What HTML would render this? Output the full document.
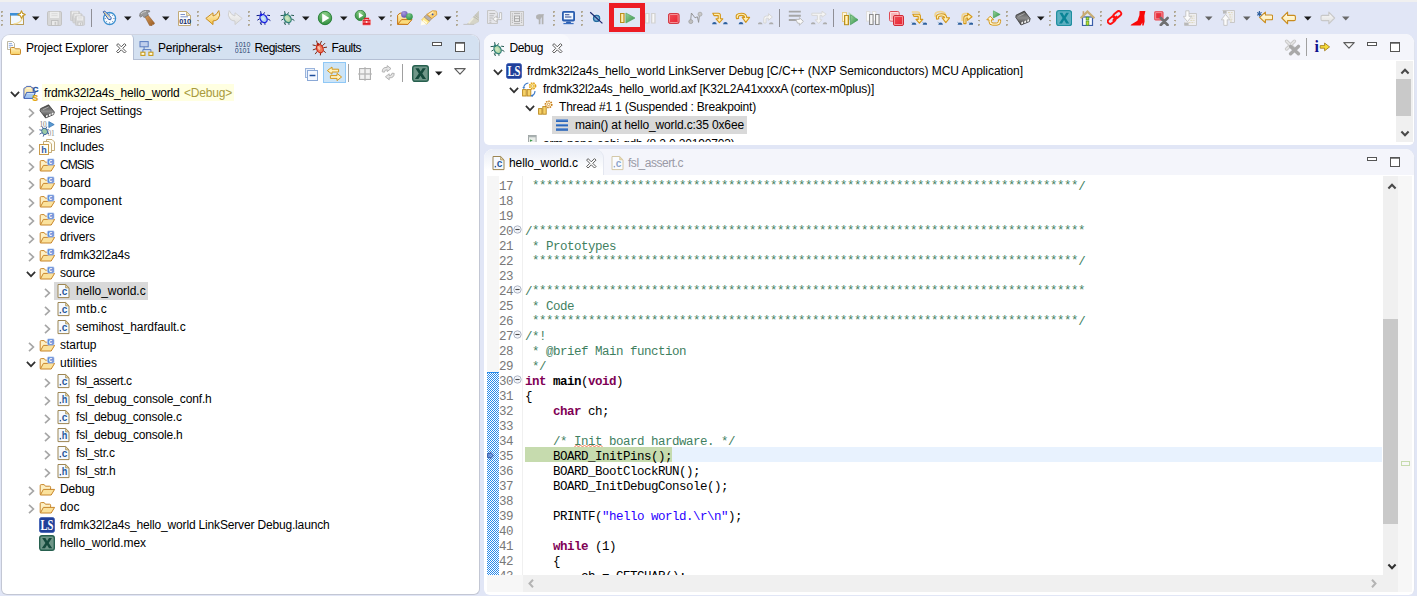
<!DOCTYPE html>
<html><head><meta charset="utf-8"><title>MCUXpresso IDE</title>
<style>
html,body{margin:0;padding:0}
body{width:1417px;height:596px;position:relative;overflow:hidden;background:#e1e6f6;font-family:"Liberation Sans", sans-serif;font-size:12px;color:#000}
div,span.t,svg.i,span.ln,span.cd{position:absolute}
.t{white-space:pre;line-height:18px;height:18px;font-size:12px}
.ln{font-family:"Liberation Mono", monospace;font-size:12.5px;letter-spacing:-0.5px;color:#787878;white-space:pre;line-height:15px;height:15px}
.cd{font-family:"Liberation Mono", monospace;font-size:12.5px;letter-spacing:-0.5px;color:#000;white-space:pre;line-height:15px;height:15px}
.c{color:#3f7f5f} .k{color:#7f0055;font-weight:bold} .b{font-weight:bold} .s{color:#2a00ff}
.cu{color:#3f7f5f} .st{position:relative;top:-1px}
</style></head><body>
<svg width="0" height="0" style="position:absolute"><defs>
<linearGradient id="gGold" x1="0" y1="0" x2="0" y2="1"><stop offset="0" stop-color="#fff8e0"/><stop offset="1" stop-color="#f6c344"/></linearGradient>
<linearGradient id="gGold2" x1="0" y1="0" x2="1" y2="0"><stop offset="0" stop-color="#f3c650"/><stop offset="0.5" stop-color="#fff3c8"/><stop offset="1" stop-color="#f0bc48"/></linearGradient>
<radialGradient id="gGreen" cx="0.5" cy="0.25" r="0.8"><stop offset="0" stop-color="#8fd08a"/><stop offset="1" stop-color="#2b8a3a"/></radialGradient>
<linearGradient id="gGreenT" x1="0" y1="0" x2="1" y2="1"><stop offset="0" stop-color="#9ad49a"/><stop offset="1" stop-color="#2e8f45"/></linearGradient>
<linearGradient id="gGray" x1="0" y1="0" x2="0" y2="1"><stop offset="0" stop-color="#fbfbfb"/><stop offset="1" stop-color="#dcdcdc"/></linearGradient>
<linearGradient id="gGrayH" x1="0" y1="0" x2="1" y2="0"><stop offset="0" stop-color="#dadada"/><stop offset="0.5" stop-color="#fbfbfb"/><stop offset="1" stop-color="#dcdcdc"/></linearGradient>
<linearGradient id="gRed" x1="0" y1="0" x2="1" y2="1"><stop offset="0" stop-color="#f0505a"/><stop offset="1" stop-color="#e8202e"/></linearGradient>
<linearGradient id="gFolder" x1="0" y1="0" x2="0" y2="1"><stop offset="0" stop-color="#fff3c4"/><stop offset="1" stop-color="#f7cf62"/></linearGradient>
<radialGradient id="gPurple" cx="0.4" cy="0.3" r="0.8"><stop offset="0" stop-color="#a79be0"/><stop offset="1" stop-color="#5a48a8"/></radialGradient>
<radialGradient id="gGreenS" cx="0.4" cy="0.3" r="0.8"><stop offset="0" stop-color="#7cc88a"/><stop offset="1" stop-color="#1f8a3c"/></radialGradient>
<linearGradient id="gChip" x1="0" y1="0" x2="0" y2="1"><stop offset="0" stop-color="#4a4a4a"/><stop offset="0.5" stop-color="#8c8c8c"/><stop offset="1" stop-color="#3c3c3c"/></linearGradient>
<linearGradient id="gHandle" x1="0" y1="0" x2="1" y2="1"><stop offset="0" stop-color="#d8a060"/><stop offset="1" stop-color="#9a5a20"/></linearGradient>
<radialGradient id="gBugB" cx="0.45" cy="0.45" r="0.75"><stop offset="0" stop-color="#d8f0f0"/><stop offset="0.55" stop-color="#a8c8f0"/><stop offset="1" stop-color="#2a3ae8"/></radialGradient>
<radialGradient id="gBugG" cx="0.45" cy="0.45" r="0.75"><stop offset="0" stop-color="#d4ecc8"/><stop offset="0.6" stop-color="#a8d0a0"/><stop offset="1" stop-color="#6aa888"/></radialGradient>
<linearGradient id="gGoldL" x1="0" y1="0" x2="0" y2="1"><stop offset="0" stop-color="#fffdf0"/><stop offset="1" stop-color="#fde9a8"/></linearGradient>
</defs></svg>
<div style="left:0px;top:0px;width:1417px;height:2px;background:#f0f0f0"></div>
<div style="left:1px;top:10.5px;width:2px;height:2.4px;background:#a8a08c;opacity:0.9"></div>
<div style="left:2px;top:11.5px;width:1.2px;height:1px;background:#d8d2c0;opacity:0.8"></div>
<div style="left:1px;top:15px;width:2px;height:1.8px;background:#a8a08c;opacity:0.9"></div>
<div style="left:2px;top:16px;width:1.2px;height:1px;background:#d8d2c0;opacity:0.8"></div>
<div style="left:1px;top:19.5px;width:2px;height:1.8px;background:#a8a08c;opacity:0.9"></div>
<div style="left:2px;top:20.5px;width:1.2px;height:1px;background:#d8d2c0;opacity:0.8"></div>
<div style="left:1px;top:24px;width:2px;height:1.8px;background:#a8a08c;opacity:0.9"></div>
<div style="left:2px;top:25px;width:1.2px;height:1px;background:#d8d2c0;opacity:0.8"></div>
<svg class="i" style="left:10px;top:10px" width="16" height="16" viewBox="0 0 16 16" ><rect x="0.5" y="3.5" width="13" height="11" fill="#f1f8ff" stroke="#b99c58"/><rect x="0" y="3" width="14" height="2.6" fill="#3d8fd6"/><path d="M3.5 14Q11.5 13.5 12.5 7" stroke="#f3dc9a" fill="none" stroke-width="1.6"/><path d="M11.5 0.9L12.7 3.4L15.2 4.6L12.7 5.8L11.5 8.3L10.3 5.8L7.8 4.6L10.3 3.4Z" fill="#fffdf0" stroke="#c79a28" stroke-width="1.2" stroke-linejoin="round"/><path d="M11.5 2.8V6.4M9.7 4.6H13.3" stroke="#fff" stroke-width="1"/></svg>
<svg class="i" style="left:32px;top:16px" width="8" height="5" viewBox="0 0 8 5"><path d="M0 0.5H7.5L3.75 4.5Z" fill="#1a1a1a"/></svg>
<svg class="i" style="left:47px;top:10px" width="16" height="16" viewBox="0 0 16 16" ><g transform="translate(0,1) scale(1.0)"><rect x="0.5" y="0.5" width="14" height="14" rx="1.3" fill="#d6d6d6" stroke="#c3c3c3"/><rect x="3" y="0.8" width="9" height="6.2" fill="#ededed"/><path d="M4.5 2.7H10.5M4.5 4.7H10.5" stroke="#d8d8d8" stroke-width="0.9"/><rect x="4.5" y="9.5" width="6.5" height="5" fill="#e9e9e9" stroke="#c0c0c0"/><rect x="7.6" y="10.8" width="1.6" height="3" fill="#c6c6c6"/></g></svg>
<svg class="i" style="left:70px;top:10px" width="16" height="16" viewBox="0 0 16 16" ><g transform="translate(0,1) scale(0.66)"><rect x="0.5" y="0.5" width="14" height="14" rx="1.3" fill="#d6d6d6" stroke="#c3c3c3"/><rect x="3" y="0.8" width="9" height="6.2" fill="#ededed"/><path d="M4.5 2.7H10.5M4.5 4.7H10.5" stroke="#d8d8d8" stroke-width="0.9"/><rect x="4.5" y="9.5" width="6.5" height="5" fill="#e9e9e9" stroke="#c0c0c0"/><rect x="7.6" y="10.8" width="1.6" height="3" fill="#c6c6c6"/></g><g transform="translate(2.5,3.4) scale(0.66)"><rect x="0.5" y="0.5" width="14" height="14" rx="1.3" fill="#d6d6d6" stroke="#c3c3c3"/><rect x="3" y="0.8" width="9" height="6.2" fill="#ededed"/><path d="M4.5 2.7H10.5M4.5 4.7H10.5" stroke="#d8d8d8" stroke-width="0.9"/><rect x="4.5" y="9.5" width="6.5" height="5" fill="#e9e9e9" stroke="#c0c0c0"/><rect x="7.6" y="10.8" width="1.6" height="3" fill="#c6c6c6"/></g><g transform="translate(5,5.8) scale(0.66)"><rect x="0.5" y="0.5" width="14" height="14" rx="1.3" fill="#d6d6d6" stroke="#c3c3c3"/><rect x="3" y="0.8" width="9" height="6.2" fill="#ededed"/><path d="M4.5 2.7H10.5M4.5 4.7H10.5" stroke="#d8d8d8" stroke-width="0.9"/><rect x="4.5" y="9.5" width="6.5" height="5" fill="#e9e9e9" stroke="#c0c0c0"/><rect x="7.6" y="10.8" width="1.6" height="3" fill="#c6c6c6"/></g></svg>
<div style="left:91px;top:9px;width:1px;height:18px;background:#8f8f96"></div>
<svg class="i" style="left:102px;top:10px" width="16" height="16" viewBox="0 0 16 16" ><circle cx="7.6" cy="8.5" r="6" fill="#f6fbff" stroke="#3a8fd0" stroke-width="1.3"/><path d="M7.6 3.4V4.8M7.6 12.2V13.6M2.5 8.5H3.9M11.3 8.5H12.7M4 4.9L5 5.9M11.2 4.9L10.2 5.9M4 12.1L5 11.1M11.2 12.1L10.2 11.1" stroke="#6a86b0" stroke-width="0.9"/><path d="M1.2 1.8L2.8 1.2L9.3 7.6L8.6 9.8L6.4 9.3Z" fill="#dce9ff" stroke="#2d58a8" stroke-width="1"/><path d="M2.2 2.3L7.3 7.6" stroke="#e8c860" stroke-width="0.9"/></svg>
<svg class="i" style="left:124px;top:16px" width="8" height="5" viewBox="0 0 8 5"><path d="M0 0.5H7.5L3.75 4.5Z" fill="#1a1a1a"/></svg>
<svg class="i" style="left:139px;top:10px" width="16" height="16" viewBox="0 0 16 16" ><path d="M5.6 6.2L8.6 4.6L15.6 13.2L14.8 14.4L13.4 14.2L13 15.8L10.6 15.6Z" fill="url(#gHandle)" stroke="#8a5420" stroke-width="0.5"/><path d="M0.6 6.2Q0.2 3.2 3 1.4Q6 -0.4 10.2 0.4L10.8 1.8L8.2 2.6L9.4 5L5 7.6L3.6 5.6L1.8 7.2Z" fill="#9a9a9a" stroke="#6a6a6a" stroke-width="0.6"/><path d="M2 4Q3.6 1.8 7 1.4" stroke="#d0d0d0" stroke-width="0.9" fill="none"/></svg>
<svg class="i" style="left:162px;top:16px" width="8" height="5" viewBox="0 0 8 5"><path d="M0 0.5H7.5L3.75 4.5Z" fill="#1a1a1a"/></svg>
<svg class="i" style="left:177px;top:10px" width="16" height="16" viewBox="0 0 16 16" ><path d="M1.5 1.5H9.5L13.5 5.5V15.5H1.5Z" fill="#fbfcff" stroke="#c2ab78"/><path d="M9.5 1.5V5.5H13.5Z" fill="#eadfb8" stroke="#c2ab78" stroke-width="0.8"/><path d="M3.5 4.5H8M3.5 6.8H11" stroke="#7d92c8" stroke-width="1"/><text x="2.3" y="14.2" font-family="Liberation Sans, sans-serif" font-weight="bold" font-size="7.4" fill="#1a2f6a" letter-spacing="-0.3">010</text></svg>
<div style="left:197px;top:10.5px;width:2px;height:2.4px;background:#a8a08c;opacity:0.9"></div>
<div style="left:198px;top:11.5px;width:1.2px;height:1px;background:#d8d2c0;opacity:0.8"></div>
<div style="left:197px;top:15px;width:2px;height:1.8px;background:#a8a08c;opacity:0.9"></div>
<div style="left:198px;top:16px;width:1.2px;height:1px;background:#d8d2c0;opacity:0.8"></div>
<div style="left:197px;top:19.5px;width:2px;height:1.8px;background:#a8a08c;opacity:0.9"></div>
<div style="left:198px;top:20.5px;width:1.2px;height:1px;background:#d8d2c0;opacity:0.8"></div>
<div style="left:197px;top:24px;width:2px;height:1.8px;background:#a8a08c;opacity:0.9"></div>
<div style="left:198px;top:25px;width:1.2px;height:1px;background:#d8d2c0;opacity:0.8"></div>
<svg class="i" style="left:205px;top:10px" width="16" height="16" viewBox="0 0 16 16" ><path d="M13.8 0.6Q16 5.6 13 9Q11.2 10.8 8 11V14.6L0.8 8.4L8 2.8V6Q11.6 5.6 13.8 0.6Z" fill="url(#gGold)" stroke="#c98c1e" stroke-width="1" stroke-linejoin="round"/></svg>
<svg class="i" style="left:227px;top:10px" width="16" height="16" viewBox="0 0 16 16" ><path d="M2.2 0.6Q0 5.6 3 9Q4.8 10.8 8 11V14.6L15.2 8.4L8 2.8V6Q4.4 5.6 2.2 0.6Z" fill="url(#gGray)" stroke="#cfcfcf" stroke-width="1" stroke-linejoin="round"/></svg>
<div style="left:248px;top:10.5px;width:2px;height:2.4px;background:#a8a08c;opacity:0.9"></div>
<div style="left:249px;top:11.5px;width:1.2px;height:1px;background:#d8d2c0;opacity:0.8"></div>
<div style="left:248px;top:15px;width:2px;height:1.8px;background:#a8a08c;opacity:0.9"></div>
<div style="left:249px;top:16px;width:1.2px;height:1px;background:#d8d2c0;opacity:0.8"></div>
<div style="left:248px;top:19.5px;width:2px;height:1.8px;background:#a8a08c;opacity:0.9"></div>
<div style="left:249px;top:20.5px;width:1.2px;height:1px;background:#d8d2c0;opacity:0.8"></div>
<div style="left:248px;top:24px;width:2px;height:1.8px;background:#a8a08c;opacity:0.9"></div>
<div style="left:249px;top:25px;width:1.2px;height:1px;background:#d8d2c0;opacity:0.8"></div>
<svg class="i" style="left:256px;top:10px" width="16" height="16" viewBox="0 0 16 16" ><g stroke="#0c1a8a" stroke-width="1" fill="none"><path d="M4.6 1.2L5.2 4.4M8.6 2.4L7.2 4.6M0.6 5.6L3 5.4L4.6 6.4M1.4 10.2L3.6 8.8M3.8 12.6L5 13.6L5.4 15M5 11.6L5 13.6M9 14.8L8.8 13.4L8 12.6M14.4 10.6L12.8 9.4L11.4 9.2M14 5.6L11.6 5.2L10.6 6"/></g><ellipse cx="7.6" cy="8.6" rx="3.3" ry="4.3" transform="rotate(-32 7.6 8.6)" fill="url(#gBugB)" stroke="#1a1ee0" stroke-width="1.2"/><circle cx="5" cy="4.8" r="1.3" fill="#1a1ee0"/></svg>
<svg class="i" style="left:280px;top:10px" width="16" height="16" viewBox="0 0 16 16" ><g stroke="#245a50" stroke-width="1" fill="none"><path d="M4.6 1.2L5.2 4.4M8.6 2.4L7.2 4.6M0.6 5.6L3 5.4L4.6 6.4M1.4 10.2L3.6 8.8M3.8 12.6L5 13.6L5.4 15M5 11.6L5 13.6M9 14.8L8.8 13.4L8 12.6M14.4 10.6L12.8 9.4L11.4 9.2M14 5.6L11.6 5.2L10.6 6"/></g><ellipse cx="7.6" cy="8.6" rx="3.3" ry="4.3" transform="rotate(-32 7.6 8.6)" fill="url(#gBugG)" stroke="#2f8078" stroke-width="1.2"/><circle cx="5" cy="4.8" r="1.3" fill="#2f8078"/></svg>
<svg class="i" style="left:302px;top:16px" width="8" height="5" viewBox="0 0 8 5"><path d="M0 0.5H7.5L3.75 4.5Z" fill="#1a1a1a"/></svg>
<svg class="i" style="left:317px;top:10px" width="16" height="16" viewBox="0 0 16 16" ><circle cx="8" cy="8" r="6.7" fill="url(#gGreen)" stroke="#1f7a30" stroke-width="0.9"/><path d="M5.2 3.4L12.4 8L5.2 12.6Z" fill="#fff"/></svg>
<svg class="i" style="left:340px;top:16px" width="8" height="5" viewBox="0 0 8 5"><path d="M0 0.5H7.5L3.75 4.5Z" fill="#1a1a1a"/></svg>
<svg class="i" style="left:354px;top:10px" width="18" height="16" viewBox="0 0 18 16" ><circle cx="6.4" cy="5.4" r="5.2" fill="url(#gGreen)" stroke="#1f7a30" stroke-width="0.8"/><path d="M4.9 2.6L9.2 5.4L4.9 8.2Z" fill="#fff"/><rect x="8.4" y="9.6" width="8.4" height="5.6" rx="0.8" fill="#e01b24" stroke="#fbe4e4" stroke-width="0.5"/><path d="M10.6 9.6V8.4H14.6V9.6" stroke="#e01b24" stroke-width="1.1" fill="none"/><path d="M8.6 12H16.6" stroke="#f8b0b0" stroke-width="0.8"/><rect x="11.8" y="11.2" width="1.6" height="1.6" fill="#fff0f0"/></svg>
<svg class="i" style="left:378px;top:16px" width="8" height="5" viewBox="0 0 8 5"><path d="M0 0.5H7.5L3.75 4.5Z" fill="#1a1a1a"/></svg>
<div style="left:390px;top:10.5px;width:2px;height:2.4px;background:#a8a08c;opacity:0.9"></div>
<div style="left:391px;top:11.5px;width:1.2px;height:1px;background:#d8d2c0;opacity:0.8"></div>
<div style="left:390px;top:15px;width:2px;height:1.8px;background:#a8a08c;opacity:0.9"></div>
<div style="left:391px;top:16px;width:1.2px;height:1px;background:#d8d2c0;opacity:0.8"></div>
<div style="left:390px;top:19.5px;width:2px;height:1.8px;background:#a8a08c;opacity:0.9"></div>
<div style="left:391px;top:20.5px;width:1.2px;height:1px;background:#d8d2c0;opacity:0.8"></div>
<div style="left:390px;top:24px;width:2px;height:1.8px;background:#a8a08c;opacity:0.9"></div>
<div style="left:391px;top:25px;width:1.2px;height:1px;background:#d8d2c0;opacity:0.8"></div>
<svg class="i" style="left:397px;top:10px" width="16" height="16" viewBox="0 0 16 16" ><path d="M0.6 5.2L3 3.2H7L8.4 5H15L10.2 9.8L10.8 14.4H0.6Z" fill="url(#gFolder)" stroke="#c67618" stroke-width="1" stroke-linejoin="round"/><path d="M0.8 14.2L4.6 9.6H15L10.8 14.4Z" fill="#fbdc7e" stroke="#c67618" stroke-width="1" stroke-linejoin="round"/><circle cx="7.4" cy="4.4" r="3.3" fill="url(#gPurple)"/><circle cx="12.4" cy="6.6" r="3.4" fill="url(#gGreenS)"/></svg>
<svg class="i" style="left:420px;top:10px" width="18" height="16" viewBox="0 0 18 16" ><path d="M0.6 15.4L1.8 9.6L7.4 14Z" fill="#fffdf0"/><path d="M1.6 10L4.2 7L9.4 11.2L6.8 14.2Z" fill="#ffe98a" stroke="#eaba4a" stroke-width="0.6"/><path d="M3 10.4L7 13.4" stroke="#fffbe0" stroke-width="1.6"/><path d="M4.2 7L6.8 4.4L11.8 8.6L9.4 11.2Z" fill="#b4b0b0" stroke="#a88a60" stroke-width="0.7"/><path d="M6.8 4.4L12.4 0.8L16.4 1L16.8 4.8L11.8 8.6Z" fill="#f9cf74" stroke="#d4922a" stroke-width="0.8"/><path d="M8.8 4.8L13.4 1.8" stroke="#fff0c0" stroke-width="1.3"/><circle cx="12.6" cy="4.4" r="0.9" fill="#3050b0"/></svg>
<svg class="i" style="left:444px;top:16px" width="8" height="5" viewBox="0 0 8 5"><path d="M0 0.5H7.5L3.75 4.5Z" fill="#1a1a1a"/></svg>
<div style="left:456px;top:10.5px;width:2px;height:2.4px;background:#a8a08c;opacity:0.9"></div>
<div style="left:457px;top:11.5px;width:1.2px;height:1px;background:#d8d2c0;opacity:0.8"></div>
<div style="left:456px;top:15px;width:2px;height:1.8px;background:#a8a08c;opacity:0.9"></div>
<div style="left:457px;top:16px;width:1.2px;height:1px;background:#d8d2c0;opacity:0.8"></div>
<div style="left:456px;top:19.5px;width:2px;height:1.8px;background:#a8a08c;opacity:0.9"></div>
<div style="left:457px;top:20.5px;width:1.2px;height:1px;background:#d8d2c0;opacity:0.8"></div>
<div style="left:456px;top:24px;width:2px;height:1.8px;background:#a8a08c;opacity:0.9"></div>
<div style="left:457px;top:25px;width:1.2px;height:1px;background:#d8d2c0;opacity:0.8"></div>
<svg class="i" style="left:463px;top:10px" width="16" height="16" viewBox="0 0 16 16" ><path d="M0.4 14.4H11" stroke="#c4c4c4" stroke-width="1.1"/><path d="M4.4 14L15.8 1V11.6L11.4 14Z" fill="#d6d5c8" stroke="#cacac0" stroke-width="0.6"/><path d="M10.6 6.6L15.6 10M11.8 5.2L15.8 8" stroke="#b8b8ae" stroke-width="1"/><path d="M5.6 13.2L10.2 8" stroke="#ecece0" stroke-width="1.8"/><path d="M12 5L15.6 1.4V7.6Z" fill="#c8c8c0"/></svg>
<svg class="i" style="left:487px;top:10px" width="16" height="16" viewBox="0 0 16 16" ><path d="M0.5 0.5H8L10.5 3V13.5H0.5Z" fill="#e6e6ea" stroke="#c6c6c6"/><path d="M2.4 3.6H8.2M2.4 5.8H6.8M2.4 8H5.8M2.4 10.2H4.4M2.4 12.2H4.4" stroke="#b8b8b8" stroke-width="1"/><path d="M12.6 2.6H14.6V9.6H9.8V12L5.6 9L9.8 6V8H12.6Z" fill="#fafafa" stroke="#bdbdbd" stroke-width="0.9" stroke-linejoin="round"/></svg>
<svg class="i" style="left:509px;top:10px" width="16" height="16" viewBox="0 0 16 16" ><rect x="1.5" y="1.5" width="13" height="14" fill="#e4e4e6" stroke="#c4c4c4"/><path d="M3.4 3.4V13.8M12.6 3.4V13.8" stroke="#aaa" stroke-width="1" stroke-dasharray="1 1.1"/><path d="M5 3.4H11M5 13.6H11" stroke="#b4b4b4" stroke-width="1"/><rect x="5.5" y="6" width="5" height="5.4" fill="#ececec" stroke="#a8a8a8"/><path d="M5.5 8.7H10.5" stroke="#a8a8a8"/></svg>
<svg class="i" style="left:533px;top:10px" width="16" height="16" viewBox="0 0 16 16" ><path d="M6.6 4.6V14.2M9.6 4.6V14.2" stroke="#b2b2b2" stroke-width="1.7"/><path d="M11.2 4.2H6.2Q3 4.2 3 7Q3 9.8 6.8 9.8Z" fill="#b2b2b2"/></svg>
<div style="left:553px;top:10.5px;width:2px;height:2.4px;background:#a8a08c;opacity:0.9"></div>
<div style="left:554px;top:11.5px;width:1.2px;height:1px;background:#d8d2c0;opacity:0.8"></div>
<div style="left:553px;top:15px;width:2px;height:1.8px;background:#a8a08c;opacity:0.9"></div>
<div style="left:554px;top:16px;width:1.2px;height:1px;background:#d8d2c0;opacity:0.8"></div>
<div style="left:553px;top:19.5px;width:2px;height:1.8px;background:#a8a08c;opacity:0.9"></div>
<div style="left:554px;top:20.5px;width:1.2px;height:1px;background:#d8d2c0;opacity:0.8"></div>
<div style="left:553px;top:24px;width:2px;height:1.8px;background:#a8a08c;opacity:0.9"></div>
<div style="left:554px;top:25px;width:1.2px;height:1px;background:#d8d2c0;opacity:0.8"></div>
<svg class="i" style="left:561px;top:10px" width="16" height="16" viewBox="0 0 16 16" ><rect x="1" y="1" width="13" height="10.4" rx="1.6" fill="#2a5db0"/><rect x="2.8" y="2.8" width="9.4" height="6.6" fill="#f1f8ff"/><path d="M4 4.8H8.4M4 7H10.4" stroke="#25408e" stroke-width="1.1"/><path d="M5.6 11.4H9.4L10.2 13H4.8Z" fill="#2a5db0"/><rect x="2.4" y="13" width="10.2" height="1.2" fill="#3a6ec0"/></svg>
<div style="left:581px;top:10.5px;width:2px;height:2.4px;background:#a8a08c;opacity:0.9"></div>
<div style="left:582px;top:11.5px;width:1.2px;height:1px;background:#d8d2c0;opacity:0.8"></div>
<div style="left:581px;top:15px;width:2px;height:1.8px;background:#a8a08c;opacity:0.9"></div>
<div style="left:582px;top:16px;width:1.2px;height:1px;background:#d8d2c0;opacity:0.8"></div>
<div style="left:581px;top:19.5px;width:2px;height:1.8px;background:#a8a08c;opacity:0.9"></div>
<div style="left:582px;top:20.5px;width:1.2px;height:1px;background:#d8d2c0;opacity:0.8"></div>
<div style="left:581px;top:24px;width:2px;height:1.8px;background:#a8a08c;opacity:0.9"></div>
<div style="left:582px;top:25px;width:1.2px;height:1px;background:#d8d2c0;opacity:0.8"></div>
<svg class="i" style="left:589px;top:10px" width="16" height="16" viewBox="0 0 16 16" ><circle cx="7.6" cy="8.4" r="3.2" fill="#7fb2d6" stroke="#246aa0" stroke-width="1.5"/><circle cx="7.6" cy="8.4" r="4.3" fill="none" stroke="#f4f8ff" stroke-width="0.7"/><path d="M1.2 2.2L13.4 13.4" stroke="#1c2870" stroke-width="1.2"/></svg>
<div style="left:609px;top:3px;width:36px;height:29px;box-sizing:border-box;border:5px solid #ed1c24;background:#dfe8f7"></div>
<svg class="i" style="left:619px;top:10px" width="16" height="16" viewBox="0 0 16 16" ><rect x="1.5" y="3.5" width="3.6" height="9" fill="url(#gGold2)" stroke="#b8901e"/><path d="M6.9 3L16.2 8L6.9 13Z" fill="url(#gGreenT)" stroke="#4a9e5a" stroke-width="0.6"/></svg>
<svg class="i" style="left:643px;top:10px" width="16" height="16" viewBox="0 0 16 16" ><rect x="2.5" y="3.5" width="3.6" height="9.5" fill="url(#gGrayH)" stroke="#d2d2d2"/><rect x="8.5" y="3.5" width="3.6" height="9.5" fill="url(#gGrayH)" stroke="#d2d2d2"/></svg>
<svg class="i" style="left:666px;top:10px" width="16" height="16" viewBox="0 0 16 16" ><rect x="2.5" y="3.5" width="10.6" height="10" rx="1.6" fill="url(#gRed)" stroke="#d03a44"/><rect x="3.5" y="4.5" width="8.6" height="8" rx="0.8" fill="none" stroke="#f7a6aa" stroke-width="0.8"/></svg>
<svg class="i" style="left:688px;top:10px" width="16" height="16" viewBox="0 0 16 16" ><path d="M2.6 11L3.4 3L7 7.8L9.4 6.8L10.6 12.4L11.4 5.6" fill="none" stroke="#8f8f8f" stroke-width="0.9"/><circle cx="2.8" cy="11.6" r="2" fill="#c0c0c0" stroke="#a0a0a0" stroke-width="0.8"/><circle cx="12" cy="4.2" r="2" fill="#c8c8c8" stroke="#a8a8a8" stroke-width="0.8"/></svg>
<svg class="i" style="left:712px;top:10px" width="16" height="16" viewBox="0 0 16 16" ><path d="M0.8 3.2H6.4Q8.4 3.2 8.4 5.2V8.8H10.8L7.4 12.6L4 8.8H6.2V5.6H2Z" fill="#fff0b4" stroke="#d4981c" stroke-width="1.1" stroke-linejoin="round"/><path d="M0.0 14.3Q0.3999999999999999 12 2.4 12Q4.4 12 4.8 14.3Z" fill="#2b5f9e"/><path d="M11.0 14.3Q11.4 12 13.4 12Q15.4 12 15.8 14.3Z" fill="#2b5f9e"/></svg>
<svg class="i" style="left:735px;top:10px" width="16" height="16" viewBox="0 0 16 16" ><path d="M1.6 8.8Q-0.4 3.2 6.4 3.2Q11.6 3.2 11.8 7.4H14.6L10.8 12.4L7.2 7.4H9.6Q9.2 5.4 6.2 5.4Q2.6 5.4 3.6 8.4Z" fill="#fff0b4" stroke="#d4981c" stroke-width="1.1" stroke-linejoin="round"/><path d="M3.6 14.3Q4 12 6 12Q8 12 8.4 14.3Z" fill="#2b5f9e"/></svg>
<svg class="i" style="left:758px;top:10px" width="16" height="16" viewBox="0 0 16 16" ><path d="M5.8 13V8.6Q5.8 6 8.4 6H10.4V3.6L14.4 7L10.4 10.4V8.2H8.6Q8 8.2 8 9V13Z" fill="#f6f6f6" stroke="#d6d6d6" stroke-width="1" stroke-linejoin="round"/><path d="M-0.19999999999999973 14.3Q0.20000000000000018 12.2 2.2 12.2Q4.2 12.2 4.6 14.3Z" fill="#adadad"/><path d="M10.799999999999999 14.3Q11.2 12.2 13.2 12.2Q15.2 12.2 15.6 14.3Z" fill="#adadad"/></svg>
<div style="left:779px;top:9px;width:1px;height:18px;background:#8f8f96"></div>
<svg class="i" style="left:788px;top:10px" width="16" height="16" viewBox="0 0 16 16" ><path d="M0.8 1.6H12.8M0.8 5.8H12.8M0.8 10H9" stroke="#a6a6a6" stroke-width="1.9"/><path d="M7.8 9.4H11.4V7.6L15.4 11.4L11.4 15.2V13.2H9.6Z" fill="#fafafa" stroke="#b4b4b4" stroke-width="0.9" stroke-linejoin="round"/></svg>
<svg class="i" style="left:811px;top:10px" width="16" height="16" viewBox="0 0 16 16" ><path d="M0.8 3.2H11V1.2L15.2 4.2L11 7.2V5.4H9V9.8H11L7.6 13.4L4.2 9.8H6.4V5.4H0.8Z" fill="#f4f4f4" stroke="#d8d8d8" stroke-width="1" stroke-linejoin="round"/><path d="M-0.19999999999999973 14.3Q0.20000000000000018 12.2 2.2 12.2Q4.2 12.2 4.6 14.3Z" fill="#adadad"/><path d="M11.6 14.3Q12 12.2 14 12.2Q16 12.2 16.4 14.3Z" fill="#adadad"/></svg>
<div style="left:833px;top:9px;width:1px;height:18px;background:#8f8f96"></div>
<svg class="i" style="left:842px;top:10px" width="16" height="16" viewBox="0 0 16 16" ><rect x="0.5" y="2.5" width="4" height="9" fill="#fff6da" stroke="#e4cc8a"/><path d="M6.6 2L13 6.4L6.6 10.8Z" fill="#b8dcc0"/><rect x="2.5" y="5.5" width="4" height="9.2" fill="url(#gGold2)" stroke="#b8901e"/><path d="M8.4 4.8L16.2 9.8L8.4 14.8Z" fill="url(#gGreenT)" stroke="#3a9650" stroke-width="0.6"/></svg>
<svg class="i" style="left:865px;top:10px" width="16" height="16" viewBox="0 0 16 16" ><rect x="1.5" y="1.5" width="3.4" height="9.6" fill="#fafafa" stroke="#dedede"/><rect x="7.5" y="1.5" width="3.4" height="9.6" fill="#fafafa" stroke="#dedede"/><rect x="4.5" y="4.5" width="3.6" height="10" fill="url(#gGrayH)" stroke="#8c8c8c"/><rect x="10.5" y="4.5" width="3.6" height="10" fill="url(#gGrayH)" stroke="#8c8c8c"/></svg>
<svg class="i" style="left:888px;top:10px" width="16" height="16" viewBox="0 0 16 16" ><rect x="1.5" y="1.5" width="9.6" height="9.6" rx="1.4" fill="#f7b4b8" stroke="#de4a54"/><rect x="2.6" y="2.6" width="7.4" height="7.4" fill="none" stroke="#fde4e4" stroke-width="0.9"/><rect x="5.5" y="5.5" width="10" height="10" rx="1.4" fill="url(#gRed)" stroke="#d02a36"/><rect x="6.6" y="6.6" width="7.8" height="7.8" fill="none" stroke="#f7a0a6" stroke-width="0.8"/></svg>
<svg class="i" style="left:911px;top:10px" width="16" height="16" viewBox="0 0 16 16" ><path d="M0.8 2H6.6Q8.6 2 8.6 4V7.6" fill="none" stroke="#f0d490" stroke-width="1.6"/><path d="M1.8 4.2H7.4Q9.4 4.2 9.4 6.2V9.4H11.8L8.4 13.2L5 9.4H7.2V6.4H3Z" fill="#fff0b4" stroke="#d4981c" stroke-width="1.1" stroke-linejoin="round"/><path d="M0 12L2 13" stroke="#a8c0d8" stroke-width="1"/><path d="M0.6000000000000001 14.7Q1 12.4 3 12.4Q5 12.4 5.4 14.7Z" fill="#2b5f9e"/><path d="M11 12L13 13" stroke="#a8c0d8" stroke-width="1"/><path d="M11.6 14.7Q12 12.4 14 12.4Q16 12.4 16.4 14.7Z" fill="#2b5f9e"/></svg>
<svg class="i" style="left:934px;top:10px" width="16" height="16" viewBox="0 0 16 16" ><path d="M1.4 6.8Q0 1.6 6.4 1.6Q10.4 1.6 11.6 4.6" fill="none" stroke="#f0d490" stroke-width="1.8"/><path d="M2.8 9.2Q0.8 3.8 7.4 3.8Q12.4 3.8 12.8 7.8H15.6L11.8 12.6L8.2 7.8H10.6Q10.2 6 7.2 6Q3.8 6 4.8 8.8Z" fill="#fff0b4" stroke="#d4981c" stroke-width="1.1" stroke-linejoin="round"/><path d="M3.5999999999999996 12L5.6 13" stroke="#a8c0d8" stroke-width="1"/><path d="M4.199999999999999 14.7Q4.6 12.4 6.6 12.4Q8.6 12.4 9.0 14.7Z" fill="#2b5f9e"/></svg>
<svg class="i" style="left:957px;top:10px" width="16" height="16" viewBox="0 0 16 16" ><path d="M5.2 11V6.4Q5.2 3.6 8 3.6H10" fill="none" stroke="#f0d490" stroke-width="1.8"/><path d="M6.8 13.6V8Q6.8 5.6 9.2 5.6H10.6V3.2L15 6.8L10.6 10.4V8H9.6Q9 8 9 8.8V13.6Z" fill="#fff0b4" stroke="#d4981c" stroke-width="1.1" stroke-linejoin="round"/><path d="M0 12L2 13" stroke="#a8c0d8" stroke-width="1"/><path d="M0.6000000000000001 14.7Q1 12.4 3 12.4Q5 12.4 5.4 14.7Z" fill="#2b5f9e"/><path d="M11.2 12L13.2 13" stroke="#a8c0d8" stroke-width="1"/><path d="M11.799999999999999 14.7Q12.2 12.4 14.2 12.4Q16.2 12.4 16.599999999999998 14.7Z" fill="#2b5f9e"/></svg>
<div style="left:978px;top:10.5px;width:2px;height:2.4px;background:#a8a08c;opacity:0.9"></div>
<div style="left:979px;top:11.5px;width:1.2px;height:1px;background:#d8d2c0;opacity:0.8"></div>
<div style="left:978px;top:15px;width:2px;height:1.8px;background:#a8a08c;opacity:0.9"></div>
<div style="left:979px;top:16px;width:1.2px;height:1px;background:#d8d2c0;opacity:0.8"></div>
<div style="left:978px;top:19.5px;width:2px;height:1.8px;background:#a8a08c;opacity:0.9"></div>
<div style="left:979px;top:20.5px;width:1.2px;height:1px;background:#d8d2c0;opacity:0.8"></div>
<div style="left:978px;top:24px;width:2px;height:1.8px;background:#a8a08c;opacity:0.9"></div>
<div style="left:979px;top:25px;width:1.2px;height:1px;background:#d8d2c0;opacity:0.8"></div>
<svg class="i" style="left:986px;top:10px" width="16" height="16" viewBox="0 0 16 16" ><path d="M7.4 0.8L14.2 4.4L7.4 8Z" fill="url(#gGreenT)" stroke="#2f9a4a" stroke-width="0.5"/><path d="M4.2 6.2L7.6 9.8H5.4V11.4Q5.4 13 7 13H10.6Q12.4 13 12.4 11.2V9.8H14.6V11.6Q14.6 15.2 11 15.2H6.6Q3 15.2 3 11.6V9.8H0.8Z" fill="#fff6d4" stroke="#d4981c" stroke-width="1" stroke-linejoin="round"/></svg>
<div style="left:1006px;top:10.5px;width:2px;height:2.4px;background:#a8a08c;opacity:0.9"></div>
<div style="left:1007px;top:11.5px;width:1.2px;height:1px;background:#d8d2c0;opacity:0.8"></div>
<div style="left:1006px;top:15px;width:2px;height:1.8px;background:#a8a08c;opacity:0.9"></div>
<div style="left:1007px;top:16px;width:1.2px;height:1px;background:#d8d2c0;opacity:0.8"></div>
<div style="left:1006px;top:19.5px;width:2px;height:1.8px;background:#a8a08c;opacity:0.9"></div>
<div style="left:1007px;top:20.5px;width:1.2px;height:1px;background:#d8d2c0;opacity:0.8"></div>
<div style="left:1006px;top:24px;width:2px;height:1.8px;background:#a8a08c;opacity:0.9"></div>
<div style="left:1007px;top:25px;width:1.2px;height:1px;background:#d8d2c0;opacity:0.8"></div>
<svg class="i" style="left:1015px;top:10px" width="16" height="16" viewBox="0 0 16 16" ><path d="M1 5.2L9.4 1L15.2 8.6L14.4 11.6L6 15L0.8 7.4Z" fill="url(#gChip)" stroke="#2c2c2c" stroke-width="0.7" stroke-linejoin="round"/><path d="M3.4 6.4L9.6 3.4" stroke="#b8b8b8" stroke-width="0.8"/><path d="M6.2 14.4L6.4 12.2L8 11.6L8.2 13.6ZM9.2 13.2L9.4 11L11 10.4L11.2 12.4ZM12.2 12L12.4 9.8L14 9.2L14.2 11.2Z" fill="#f2f2f2"/></svg>
<svg class="i" style="left:1037px;top:16px" width="8" height="5" viewBox="0 0 8 5"><path d="M0 0.5H7.5L3.75 4.5Z" fill="#1a1a1a"/></svg>
<div style="left:1049px;top:10.5px;width:2px;height:2.4px;background:#a8a08c;opacity:0.9"></div>
<div style="left:1050px;top:11.5px;width:1.2px;height:1px;background:#d8d2c0;opacity:0.8"></div>
<div style="left:1049px;top:15px;width:2px;height:1.8px;background:#a8a08c;opacity:0.9"></div>
<div style="left:1050px;top:16px;width:1.2px;height:1px;background:#d8d2c0;opacity:0.8"></div>
<div style="left:1049px;top:19.5px;width:2px;height:1.8px;background:#a8a08c;opacity:0.9"></div>
<div style="left:1050px;top:20.5px;width:1.2px;height:1px;background:#d8d2c0;opacity:0.8"></div>
<div style="left:1049px;top:24px;width:2px;height:1.8px;background:#a8a08c;opacity:0.9"></div>
<div style="left:1050px;top:25px;width:1.2px;height:1px;background:#d8d2c0;opacity:0.8"></div>
<svg class="i" style="left:1056px;top:10px" width="16" height="16" viewBox="0 0 16 16" ><rect x="0.6" y="0.6" width="15" height="15" rx="2.4" fill="#5cafc0" stroke="#1f8fa0" stroke-width="1.2"/><path d="M3.4 2.8H6.4L8.2 6L10.2 2.8H13L9.7 8L13.2 13.4H10.2L8.1 10L6 13.4H3L6.6 8Z" fill="#0a8496"/></svg>
<svg class="i" style="left:1080px;top:10px" width="16" height="16" viewBox="0 0 16 16" ><rect x="2.5" y="7" width="10" height="8.5" fill="#f7fbff" stroke="#3a5ea8" stroke-width="1.2"/><rect x="2.6" y="1.2" width="1.6" height="4" fill="#c8a070"/><path d="M0.6 8.2L7.5 1.6L14.4 8.2" fill="none" stroke="#c8ad74" stroke-width="2.2" stroke-linejoin="miter"/><rect x="6.2" y="7.2" width="2.6" height="2.6" fill="#c8dc28" stroke="#4c9a2c" stroke-width="0.8"/><rect x="6.2" y="11" width="2.6" height="4.2" fill="#c8dc28" stroke="#4c9a2c" stroke-width="0.8"/></svg>
<div style="left:1100px;top:10.5px;width:2px;height:2.4px;background:#a8a08c;opacity:0.9"></div>
<div style="left:1101px;top:11.5px;width:1.2px;height:1px;background:#d8d2c0;opacity:0.8"></div>
<div style="left:1100px;top:15px;width:2px;height:1.8px;background:#a8a08c;opacity:0.9"></div>
<div style="left:1101px;top:16px;width:1.2px;height:1px;background:#d8d2c0;opacity:0.8"></div>
<div style="left:1100px;top:19.5px;width:2px;height:1.8px;background:#a8a08c;opacity:0.9"></div>
<div style="left:1101px;top:20.5px;width:1.2px;height:1px;background:#d8d2c0;opacity:0.8"></div>
<div style="left:1100px;top:24px;width:2px;height:1.8px;background:#a8a08c;opacity:0.9"></div>
<div style="left:1101px;top:25px;width:1.2px;height:1px;background:#d8d2c0;opacity:0.8"></div>
<svg class="i" style="left:1107px;top:10px" width="16" height="16" viewBox="0 0 16 16" ><g fill="none" stroke="#ff1212" stroke-width="1.9" stroke-linecap="round"><rect x="-1.6" y="-3.4" width="8.6" height="5" rx="2.5" transform="translate(3.2 12.6) rotate(-40)"/><rect x="-1.6" y="-3.4" width="8.6" height="5" rx="2.5" transform="translate(8.8 7.2) rotate(-40)"/><path d="M6.4 10.2L9.6 6.6"/></g></svg>
<svg class="i" style="left:1130px;top:10px" width="16" height="16" viewBox="0 0 16 16" ><path d="M9.6 1H15.4L14.4 5.6L14.6 11.4L13.6 15.4H12.2L12.4 12.6L10.6 15.4H0.6L1.2 14.4L7.4 10.8L9.4 5.2Z" fill="#f80808"/></svg>
<svg class="i" style="left:1154px;top:10px" width="16" height="16" viewBox="0 0 16 16" ><rect x="0.5" y="1.5" width="8.6" height="8.6" rx="1" fill="#e8313f" stroke="#e86068"/><rect x="1.7" y="2.7" width="6.2" height="6.2" fill="none" stroke="#f8a8ac" stroke-width="0.8"/><path d="M6.8 8L13.6 15M13.6 8L6.8 15" stroke="#707070" stroke-width="2.6" stroke-linecap="round"/></svg>
<div style="left:1174px;top:10.5px;width:2px;height:2.4px;background:#a8a08c;opacity:0.9"></div>
<div style="left:1175px;top:11.5px;width:1.2px;height:1px;background:#d8d2c0;opacity:0.8"></div>
<div style="left:1174px;top:15px;width:2px;height:1.8px;background:#a8a08c;opacity:0.9"></div>
<div style="left:1175px;top:16px;width:1.2px;height:1px;background:#d8d2c0;opacity:0.8"></div>
<div style="left:1174px;top:19.5px;width:2px;height:1.8px;background:#a8a08c;opacity:0.9"></div>
<div style="left:1175px;top:20.5px;width:1.2px;height:1px;background:#d8d2c0;opacity:0.8"></div>
<div style="left:1174px;top:24px;width:2px;height:1.8px;background:#a8a08c;opacity:0.9"></div>
<div style="left:1175px;top:25px;width:1.2px;height:1px;background:#d8d2c0;opacity:0.8"></div>
<svg class="i" style="left:1183px;top:10px" width="16" height="16" viewBox="0 0 16 16" ><path d="M5.5 3.5H13.5V15.5H1.5V12.5" fill="#eeeef2" stroke="#c8c8c8"/><path d="M7.4 6H11.6M8.4 8.2H11.6M7.4 10.4H11.6M5.6 12.6H11.6" stroke="#dcd6b8" stroke-width="1" stroke-dasharray="2 0.8"/><rect x="1.6" y="12.6" width="4" height="2.6" fill="#b8b8b8"/><path d="M2.8 0.8H6V6.4H8.8L4.4 11.6L0.2 6.4H2.8Z" fill="#fbfbfb" stroke="#c4c4c4" stroke-width="0.9" stroke-linejoin="round"/></svg>
<svg class="i" style="left:1205px;top:16px" width="8" height="5" viewBox="0 0 8 5"><path d="M0 0.5H7.5L3.75 4.5Z" fill="#626262"/></svg>
<svg class="i" style="left:1221px;top:10px" width="16" height="16" viewBox="0 0 16 16" ><path d="M1.5 0.5H13.5V12.5H9" fill="#eeeef2" stroke="#c8c8c8"/><rect x="2" y="1" width="3.6" height="2.6" fill="#b8b8b8"/><path d="M7 2.6H11.6M8 4.8H11.6M8.4 7H11.6M9.4 9.2H11.6M9 11H11.6" stroke="#dcd6b8" stroke-width="1" stroke-dasharray="2 0.8"/><path d="M2.8 15.4H6.2V9.8H9L4.6 4.4L0.2 9.8H2.8Z" fill="#fbfbfb" stroke="#c4c4c4" stroke-width="0.9" stroke-linejoin="round"/></svg>
<svg class="i" style="left:1243px;top:16px" width="8" height="5" viewBox="0 0 8 5"><path d="M0 0.5H7.5L3.75 4.5Z" fill="#626262"/></svg>
<svg class="i" style="left:1257px;top:10px" width="16" height="16" viewBox="0 0 16 16" ><path d="M2.6 7.4L8.4 2.2V5H14.4Q15.6 5 15.6 6.2V8.6Q15.6 9.8 14.4 9.8H8.4V12.8Z" fill="url(#gGoldL)" stroke="#c98c1e" stroke-width="1.1" stroke-linejoin="round"/><path d="M2.4 1V6.6M0.2 2.4L4.6 5.2M4.6 2.4L0.2 5.2" stroke="#2d5f9e" stroke-width="1.1"/></svg>
<svg class="i" style="left:1281px;top:10px" width="16" height="16" viewBox="0 0 16 16" ><path d="M0.8 8L6.6 2.2V5.4H13Q14.4 5.4 14.4 6.8V9.2Q14.4 10.6 13 10.6H6.6V13.8Z" fill="url(#gGoldL)" stroke="#c98c1e" stroke-width="1.1" stroke-linejoin="round"/></svg>
<svg class="i" style="left:1304px;top:16px" width="8" height="5" viewBox="0 0 8 5"><path d="M0 0.5H7.5L3.75 4.5Z" fill="#1a1a1a"/></svg>
<svg class="i" style="left:1320px;top:10px" width="16" height="16" viewBox="0 0 16 16" ><path d="M14.6 8L8.8 2.2V5.4H2.4Q1 5.4 1 6.8V9.2Q1 10.6 2.4 10.6H8.8V13.8Z" fill="url(#gGray)" stroke="#c8c8c8" stroke-width="1.1" stroke-linejoin="round"/></svg>
<svg class="i" style="left:1342px;top:16px" width="8" height="5" viewBox="0 0 8 5"><path d="M0 0.5H7.5L3.75 4.5Z" fill="#6a6a6a"/></svg>
<div style="left:1px;top:34px;width:479px;height:561px;box-sizing:border-box;border:1px solid #c3c7d4;border-top-color:#cfd3e0;border-radius:9px 9px 6px 6px;background:#fff;overflow:hidden"><div style="left:0;top:0;width:477px;height:24px;background:#d4e1f1;border-bottom:1px solid #b4bfd4"></div><div style="left:-1px;top:-1px;width:132px;height:26px;background:#fff;border-right:1px solid #b4bfd4;border-radius:9px 5px 0 0"></div></div>
<svg class="i" style="left:6px;top:40px" width="16" height="16" viewBox="0 0 16 16" ><path d="M1.5 1.5H6.5L8.5 3.5V9.5H1.5Z" fill="#fdfdff" stroke="#b6b09a" stroke-width="0.9"/><path d="M2.8 3.6H6M2.8 5.4H7M2.8 7.2H5" stroke="#7a9ad4" stroke-width="0.8"/><path d="M4.5 8.5Q4.5 7.5 5.5 7.5H8.2L9.4 8.8H13.5Q14.5 8.8 14.5 9.8V13.5Q14.5 14.5 13.5 14.5H5.5Q4.5 14.5 4.5 13.5Z" fill="url(#gFolder)" stroke="#c88a2a" stroke-width="1"/></svg>
<span id="t0" class="t" style="left:26px;top:38.5px;letter-spacing:-0.211px;">Project Explorer</span>
<svg class="i" style="left:115.5px;top:42.5px" width="11" height="11" viewBox="0 0 11 11" ><path d="M2.1 0.6L5.3 3.8L8.5 0.6L10 2.1L6.8 5.3L10 8.5L8.5 10L5.3 6.8L2.1 10L0.6 8.5L3.8 5.3L0.6 2.1Z" fill="#fff" stroke="#505050" stroke-width="0.95" stroke-linejoin="round"/></svg>
<svg class="i" style="left:138.5px;top:40px" width="16" height="16" viewBox="0 0 16 16" ><rect x="1" y="1.6" width="8.2" height="5.2" fill="#c0cfec" stroke="#5a7cc0" stroke-width="1"/><path d="M5.1 6.8V9.6M3.9 12.4V9.6H11.9V12.4" fill="none" stroke="#5a7cc0" stroke-width="1"/><rect x="1.9" y="12.2" width="4" height="3.2" fill="#fffbe0" stroke="#c89a1c" stroke-width="1.1"/><rect x="9.9" y="12.2" width="4" height="3.2" fill="#fffbe0" stroke="#c89a1c" stroke-width="1.1"/></svg>
<span id="t1" class="t" style="left:158px;top:38.5px;letter-spacing:-0.268px;">Peripherals+</span>
<svg class="i" style="left:235px;top:40px" width="16" height="16" viewBox="0 0 16 16" ><text x="-0.2" y="6.9" font-family="Liberation Sans, sans-serif" font-size="7" fill="#2c4470">1010</text><text x="-0.2" y="12.9" font-family="Liberation Sans, sans-serif" font-size="7" fill="#2c4470">0101</text></svg>
<span id="t2" class="t" style="left:254.5px;top:38.5px;letter-spacing:-0.576px;">Registers</span>
<svg class="i" style="left:311.5px;top:40px" width="16" height="16" viewBox="0 0 16 16" ><g stroke="#7a2810" stroke-width="1" fill="none" stroke-linecap="round"><path d="M4.6 1L5.6 4.2M9.4 1.4L8 4.2M1 5L3.6 5.6L5 6.8M1.2 9.8L4 8.8M3.4 13.8L5 11.6M8.4 15L8.6 12.6M13.4 12.4L11 10.4M14.6 7.2L11.8 7.6M12.8 3.4L10.6 5.6"/></g><ellipse cx="7.8" cy="8.6" rx="3.2" ry="4.4" transform="rotate(-25 7.8 8.6)" fill="#ec7a5a" stroke="#d02818" stroke-width="1.1"/><ellipse cx="7" cy="8" rx="1.2" ry="2" transform="rotate(-25 7 8)" fill="#f8c0a8"/><circle cx="6" cy="4.4" r="1.3" fill="#b02010"/></svg>
<span id="t3" class="t" style="left:331.5px;top:38.5px;letter-spacing:-0.531px;">Faults</span>
<svg class="i" style="left:432px;top:42px" width="11" height="6" viewBox="0 0 11 6" ><rect x="0.5" y="0.5" width="9" height="3" fill="#fff" stroke="#555" stroke-width="1"/></svg>
<svg class="i" style="left:455px;top:42px" width="11" height="11" viewBox="0 0 11 11" ><rect x="0.5" y="0.5" width="9" height="9" fill="#fff" stroke="#555" stroke-width="1"/><rect x="0" y="0" width="10" height="1.7" fill="#555"/></svg>
<svg class="i" style="left:304px;top:65.5px" width="16" height="16" viewBox="0 0 16 16" ><rect x="1.5" y="2.5" width="9" height="9" fill="#e8f0fb" stroke="#9ab4dc"/><rect x="3.5" y="4.5" width="10" height="10" fill="#f4f8ff" stroke="#8aa8d6"/><path d="M5.6 9.5H11.4" stroke="#1f4f9c" stroke-width="1.5"/></svg>
<div style="left:323px;top:62px;width:23px;height:21px;box-sizing:border-box;border:1px solid #90c8f6;background:#cce4f7"></div>
<svg class="i" style="left:326px;top:65.5px" width="16" height="16" viewBox="0 0 16 16" ><path d="M1.4 4.6L6 1V3.2H12.6V6H6V8.2Z" fill="#fff2c0" stroke="#d4981c" stroke-width="1" stroke-linejoin="round"/><path d="M15.6 11L11 7.4V9.6H4.4V12.4H11V14.6Z" fill="#fff2c0" stroke="#d4981c" stroke-width="1" stroke-linejoin="round"/></svg>
<div style="left:348px;top:64px;width:1px;height:18px;background:#a0a0a0"></div>
<svg class="i" style="left:357px;top:65.5px" width="16" height="16" viewBox="0 0 16 16" ><rect x="2.5" y="2.5" width="11" height="11" fill="#e4e4e4" stroke="#b0b0b0"/><path d="M8 1V15M1 8H15" stroke="#b0b0b0" stroke-width="1"/><rect x="3.6" y="3.6" width="3.4" height="3.4" fill="#f2f2f2"/><rect x="9" y="3.6" width="3.4" height="3.4" fill="#f2f2f2"/><rect x="3.6" y="9" width="3.4" height="3.4" fill="#f2f2f2"/><rect x="9" y="9" width="3.4" height="3.4" fill="#f2f2f2"/></svg>
<svg class="i" style="left:380px;top:65px" width="16" height="16" viewBox="0 0 16 16" ><path d="M2.2 6.8Q2.2 2 7.2 2.4L7.2 0.6L11 3.6L7.2 6.6V4.8Q4.6 4.6 4.4 7.2Z" fill="#e4e4e4" stroke="#adadad" stroke-width="0.9" stroke-linejoin="round"/><path d="M14.2 8.4Q14.2 13.2 9.2 12.8L9.2 14.8L5.4 11.8L9.2 8.8V10.6Q11.8 10.8 12 8.2Z" fill="#e4e4e4" stroke="#adadad" stroke-width="0.9" stroke-linejoin="round"/></svg>
<div style="left:402px;top:64px;width:1px;height:18px;background:#a0a0a0"></div>
<svg class="i" style="left:411.5px;top:64.5px" width="17" height="17" viewBox="0 0 17 17" ><rect x="0.7" y="0.7" width="15.6" height="15.6" rx="2.2" fill="#6f9688" stroke="#27604f" stroke-width="1.4"/><g transform="scale(1.0625)"><path d="M3.2 3H6.4L8.1 6L10 3H13L9.7 8L13.2 13.2H10L8 10L6 13.2H2.8L6.4 8Z" fill="#154a3c"/></g></svg>
<svg class="i" style="left:435px;top:71px" width="8" height="5" viewBox="0 0 8 5"><path d="M0 0.5H7.5L3.75 4.5Z" fill="#1a1a1a"/></svg>
<svg class="i" style="left:454px;top:67.5px" width="12" height="7" viewBox="0 0 12 7" ><path d="M0.8 0.7H11.2L6 6.2Z" fill="#fdfdfd" stroke="#5e5e5e" stroke-width="1.2" stroke-linejoin="round"/></svg>
<div style="left:42px;top:84px;width:192px;height:17px;background:#ffffe1"></div>
<div style="left:54px;top:282px;width:94px;height:18px;background:#d9d9d9"></div>
<svg class="i" style="left:9.5px;top:90.5px" width="10" height="7" viewBox="0 0 10 7"><path d="M0.9 0.9L5 5.2L9.1 0.9" fill="none" stroke="#303030" stroke-width="1.7"/></svg>
<svg class="i" style="left:23px;top:85px" width="16" height="16" viewBox="0 0 16 16" ><path d="M0.9 13.2V3.8Q0.9 2.8 1.9 2.8H2.6L3.4 1.4H8L8.8 2.8H10.2V7" fill="#fdeab0" stroke="#4a68b8" stroke-width="1"/><path d="M3.6 3.4H8" stroke="#fff6d8" stroke-width="0.9"/><path d="M1 13.4L3.6 7.4H12.4L9.8 13.4Z" fill="#a4c6f2" stroke="#3f60b4" stroke-width="1" stroke-linejoin="round"/><path d="M4.2 8.6H11" stroke="#d8e8fc" stroke-width="0.9"/><text x="9.8" y="6.6" font-family="Liberation Sans, sans-serif" font-weight="bold" font-size="7.8" fill="#1f4f9a" stroke="#1f4f9a" stroke-width="0.3">C</text><text x="9.6" y="16" font-family="Liberation Sans, sans-serif" font-weight="bold" font-size="8.4" fill="#e2a40c" stroke="#e2a40c" stroke-width="0.3">S</text></svg>
<span id="t4" class="t" style="left:44px;top:84.0px;letter-spacing:-0.163px;">frdmk32l2a4s_hello_world</span>
<span id="t5" class="t" style="left:184px;top:84.0px;letter-spacing:-0.199px;color:#a89a3c">&lt;Debug&gt;</span>
<svg class="i" style="left:28px;top:107.5px" width="8" height="10" viewBox="0 0 8 10"><path d="M1 0.9L5.4 5L1 9.1" fill="none" stroke="#a6a6a6" stroke-width="1.7"/></svg>
<svg class="i" style="left:39px;top:103px" width="16" height="16" viewBox="0 0 16 16" ><path d="M1.6 5.6L9.6 1.8L15.4 9L14.6 11.6L6.6 15L1 7.8Z" fill="url(#gChip)" stroke="#2c2c2c" stroke-width="0.7" stroke-linejoin="round"/><path d="M4 6.6L9.8 3.8" stroke="#b8b8b8" stroke-width="0.8"/><path d="M6.8 14.4L7 12.4L8.6 11.8L8.8 13.6ZM9.8 13.2L10 11.2L11.6 10.6L11.8 12.4ZM12.6 12L12.8 10L14.4 9.4L14.6 11.2Z" fill="#f2f2f2"/></svg>
<span id="t6" class="t" style="left:60px;top:102.0px;letter-spacing:-0.128px;">Project Settings</span>
<svg class="i" style="left:28px;top:125.5px" width="8" height="10" viewBox="0 0 8 10"><path d="M1 0.9L5.4 5L1 9.1" fill="none" stroke="#a6a6a6" stroke-width="1.7"/></svg>
<svg class="i" style="left:39px;top:121px" width="16" height="16" viewBox="0 0 16 16" ><text x="0.4" y="5.6" font-family="Liberation Serif, serif" font-size="7.4" fill="#7a7a7a">10</text><text x="8.4" y="15" font-family="Liberation Serif, serif" font-size="7.4" fill="#8c8c8c">01</text><path d="M9.8 0.6L15.2 3.6L9.8 6.6Z" fill="#5a9ad0" stroke="#2f6eb0" stroke-width="0.7"/><g stroke="#2a4a8a" stroke-width="0.9" fill="none"><path d="M3.2 5.6L4.6 8M7.8 5.6L6.8 7.8M0.4 8.8L3 9.4M0.6 13.2L3.2 11.6M4.2 15.6L5 13.6M9.6 8.4L7.6 9.4M10 12.6L8 11.6"/></g><ellipse cx="5.6" cy="10.4" rx="2.7" ry="3.1" transform="rotate(-30 5.6 10.4)" fill="#9ccaa6" stroke="#3a6a9a" stroke-width="0.9"/></svg>
<span id="t7" class="t" style="left:60px;top:120.0px;letter-spacing:-0.295px;">Binaries</span>
<svg class="i" style="left:28px;top:143.5px" width="8" height="10" viewBox="0 0 8 10"><path d="M1 0.9L5.4 5L1 9.1" fill="none" stroke="#a6a6a6" stroke-width="1.7"/></svg>
<svg class="i" style="left:39px;top:139px" width="16" height="16" viewBox="0 0 16 16" ><path d="M7.5 0.5H13L15.5 3V11.5H7.5Z" fill="#fffdf4" stroke="#c0a46a" stroke-width="0.9"/><path d="M4.5 2.5H10L12.5 5V13.5H4.5Z" fill="#fffdf4" stroke="#c0a46a" stroke-width="0.9"/><rect x="0.5" y="5.5" width="9" height="10" fill="#fffef8" stroke="#c89a4a" stroke-width="1"/><text x="2.2" y="13.8" font-family="Liberation Sans, sans-serif" font-weight="bold" font-size="9" fill="#3058a8">h</text></svg>
<span id="t8" class="t" style="left:60px;top:138.0px;letter-spacing:-0.088px;">Includes</span>
<svg class="i" style="left:28px;top:161.5px" width="8" height="10" viewBox="0 0 8 10"><path d="M1 0.9L5.4 5L1 9.1" fill="none" stroke="#a6a6a6" stroke-width="1.7"/></svg>
<svg class="i" style="left:39px;top:157px" width="16" height="16" viewBox="0 0 16 16" ><path d="M1.2 13.6V4.6Q1.2 3.6 2.2 3.6H5.2L6.4 5.2H10.6Q11.6 5.2 11.6 6.2V8.4" fill="#fdf0c4" stroke="#c8862a" stroke-width="1"/><path d="M1.4 14L4.4 8.4H15.6L12.2 14Z" fill="#fbe29c" stroke="#c8862a" stroke-width="1" stroke-linejoin="round"/><rect x="8.2" y="1.8" width="7" height="6.4" rx="1.1" fill="#5c86d6" stroke="#e4ecfb" stroke-width="0.7"/><text x="9.7" y="7.1" font-family="Liberation Sans, sans-serif" font-weight="bold" font-size="6.8" fill="#fff">c</text></svg>
<span id="t9" class="t" style="left:60px;top:156.0px;letter-spacing:-0.923px;">CMSIS</span>
<svg class="i" style="left:28px;top:179.5px" width="8" height="10" viewBox="0 0 8 10"><path d="M1 0.9L5.4 5L1 9.1" fill="none" stroke="#a6a6a6" stroke-width="1.7"/></svg>
<svg class="i" style="left:39px;top:175px" width="16" height="16" viewBox="0 0 16 16" ><path d="M1.2 13.6V4.6Q1.2 3.6 2.2 3.6H5.2L6.4 5.2H10.6Q11.6 5.2 11.6 6.2V8.4" fill="#fdf0c4" stroke="#c8862a" stroke-width="1"/><path d="M1.4 14L4.4 8.4H15.6L12.2 14Z" fill="#fbe29c" stroke="#c8862a" stroke-width="1" stroke-linejoin="round"/><rect x="8.2" y="1.8" width="7" height="6.4" rx="1.1" fill="#5c86d6" stroke="#e4ecfb" stroke-width="0.7"/><text x="9.7" y="7.1" font-family="Liberation Sans, sans-serif" font-weight="bold" font-size="6.8" fill="#fff">c</text></svg>
<span id="t10" class="t" style="left:60px;top:174.0px;letter-spacing:0.059px;">board</span>
<svg class="i" style="left:28px;top:197.5px" width="8" height="10" viewBox="0 0 8 10"><path d="M1 0.9L5.4 5L1 9.1" fill="none" stroke="#a6a6a6" stroke-width="1.7"/></svg>
<svg class="i" style="left:39px;top:193px" width="16" height="16" viewBox="0 0 16 16" ><path d="M1.2 13.6V4.6Q1.2 3.6 2.2 3.6H5.2L6.4 5.2H10.6Q11.6 5.2 11.6 6.2V8.4" fill="#fdf0c4" stroke="#c8862a" stroke-width="1"/><path d="M1.4 14L4.4 8.4H15.6L12.2 14Z" fill="#fbe29c" stroke="#c8862a" stroke-width="1" stroke-linejoin="round"/><rect x="8.2" y="1.8" width="7" height="6.4" rx="1.1" fill="#5c86d6" stroke="#e4ecfb" stroke-width="0.7"/><text x="9.7" y="7.1" font-family="Liberation Sans, sans-serif" font-weight="bold" font-size="6.8" fill="#fff">c</text></svg>
<span id="t11" class="t" style="left:60px;top:192.0px;letter-spacing:0.292px;">component</span>
<svg class="i" style="left:28px;top:215.5px" width="8" height="10" viewBox="0 0 8 10"><path d="M1 0.9L5.4 5L1 9.1" fill="none" stroke="#a6a6a6" stroke-width="1.7"/></svg>
<svg class="i" style="left:39px;top:211px" width="16" height="16" viewBox="0 0 16 16" ><path d="M1.2 13.6V4.6Q1.2 3.6 2.2 3.6H5.2L6.4 5.2H10.6Q11.6 5.2 11.6 6.2V8.4" fill="#fdf0c4" stroke="#c8862a" stroke-width="1"/><path d="M1.4 14L4.4 8.4H15.6L12.2 14Z" fill="#fbe29c" stroke="#c8862a" stroke-width="1" stroke-linejoin="round"/><rect x="8.2" y="1.8" width="7" height="6.4" rx="1.1" fill="#5c86d6" stroke="#e4ecfb" stroke-width="0.7"/><text x="9.7" y="7.1" font-family="Liberation Sans, sans-serif" font-weight="bold" font-size="6.8" fill="#fff">c</text></svg>
<span id="t12" class="t" style="left:60px;top:210.0px;letter-spacing:-0.115px;">device</span>
<svg class="i" style="left:28px;top:233.5px" width="8" height="10" viewBox="0 0 8 10"><path d="M1 0.9L5.4 5L1 9.1" fill="none" stroke="#a6a6a6" stroke-width="1.7"/></svg>
<svg class="i" style="left:39px;top:229px" width="16" height="16" viewBox="0 0 16 16" ><path d="M1.2 13.6V4.6Q1.2 3.6 2.2 3.6H5.2L6.4 5.2H10.6Q11.6 5.2 11.6 6.2V8.4" fill="#fdf0c4" stroke="#c8862a" stroke-width="1"/><path d="M1.4 14L4.4 8.4H15.6L12.2 14Z" fill="#fbe29c" stroke="#c8862a" stroke-width="1" stroke-linejoin="round"/><rect x="8.2" y="1.8" width="7" height="6.4" rx="1.1" fill="#5c86d6" stroke="#e4ecfb" stroke-width="0.7"/><text x="9.7" y="7.1" font-family="Liberation Sans, sans-serif" font-weight="bold" font-size="6.8" fill="#fff">c</text></svg>
<span id="t13" class="t" style="left:60px;top:228.0px;letter-spacing:-0.145px;">drivers</span>
<svg class="i" style="left:28px;top:251.5px" width="8" height="10" viewBox="0 0 8 10"><path d="M1 0.9L5.4 5L1 9.1" fill="none" stroke="#a6a6a6" stroke-width="1.7"/></svg>
<svg class="i" style="left:39px;top:247px" width="16" height="16" viewBox="0 0 16 16" ><path d="M1.2 13.6V4.6Q1.2 3.6 2.2 3.6H5.2L6.4 5.2H10.6Q11.6 5.2 11.6 6.2V8.4" fill="#fdf0c4" stroke="#c8862a" stroke-width="1"/><path d="M1.4 14L4.4 8.4H15.6L12.2 14Z" fill="#fbe29c" stroke="#c8862a" stroke-width="1" stroke-linejoin="round"/><rect x="8.2" y="1.8" width="7" height="6.4" rx="1.1" fill="#5c86d6" stroke="#e4ecfb" stroke-width="0.7"/><text x="9.7" y="7.1" font-family="Liberation Sans, sans-serif" font-weight="bold" font-size="6.8" fill="#fff">c</text></svg>
<span id="t14" class="t" style="left:60px;top:246.0px;letter-spacing:-0.196px;">frdmk32l2a4s</span>
<svg class="i" style="left:25.5px;top:270.5px" width="10" height="7" viewBox="0 0 10 7"><path d="M0.9 0.9L5 5.2L9.1 0.9" fill="none" stroke="#303030" stroke-width="1.7"/></svg>
<svg class="i" style="left:39px;top:265px" width="16" height="16" viewBox="0 0 16 16" ><path d="M1.2 13.6V4.6Q1.2 3.6 2.2 3.6H5.2L6.4 5.2H10.6Q11.6 5.2 11.6 6.2V8.4" fill="#fdf0c4" stroke="#c8862a" stroke-width="1"/><path d="M1.4 14L4.4 8.4H15.6L12.2 14Z" fill="#fbe29c" stroke="#c8862a" stroke-width="1" stroke-linejoin="round"/><rect x="8.2" y="1.8" width="7" height="6.4" rx="1.1" fill="#5c86d6" stroke="#e4ecfb" stroke-width="0.7"/><text x="9.7" y="7.1" font-family="Liberation Sans, sans-serif" font-weight="bold" font-size="6.8" fill="#fff">c</text></svg>
<span id="t15" class="t" style="left:60px;top:264.0px;letter-spacing:-0.172px;">source</span>
<svg class="i" style="left:44px;top:287.5px" width="8" height="10" viewBox="0 0 8 10"><path d="M1 0.9L5.4 5L1 9.1" fill="none" stroke="#a6a6a6" stroke-width="1.7"/></svg>
<svg class="i" style="left:55px;top:283px" width="16" height="16" viewBox="0 0 16 16" ><path d="M3 1.5H10.6L14 4.9V14.6H3Z" fill="#f6faff" stroke="#9c8552" stroke-width="1"/><path d="M10.6 1.5V4.9H14Z" fill="#ead9a8" stroke="#9c8552" stroke-width="0.7"/><rect x="4.7" y="10.9" width="1.4" height="1.5" fill="#2a5a9c"/><text x="6.8" y="12.3" font-family="Liberation Sans, sans-serif" font-weight="bold" font-size="11" fill="#2a5a9c" textLength="5.6" lengthAdjust="spacingAndGlyphs">c</text></svg>
<span id="t16" class="t" style="left:76px;top:282.0px;letter-spacing:-0.034px;">hello_world.c</span>
<svg class="i" style="left:44px;top:305.5px" width="8" height="10" viewBox="0 0 8 10"><path d="M1 0.9L5.4 5L1 9.1" fill="none" stroke="#a6a6a6" stroke-width="1.7"/></svg>
<svg class="i" style="left:55px;top:301px" width="16" height="16" viewBox="0 0 16 16" ><path d="M3 1.5H10.6L14 4.9V14.6H3Z" fill="#f6faff" stroke="#9c8552" stroke-width="1"/><path d="M10.6 1.5V4.9H14Z" fill="#ead9a8" stroke="#9c8552" stroke-width="0.7"/><rect x="4.7" y="10.9" width="1.4" height="1.5" fill="#2a5a9c"/><text x="6.8" y="12.3" font-family="Liberation Sans, sans-serif" font-weight="bold" font-size="11" fill="#2a5a9c" textLength="5.6" lengthAdjust="spacingAndGlyphs">c</text></svg>
<span id="t17" class="t" style="left:76px;top:300.0px;letter-spacing:0.331px;">mtb.c</span>
<svg class="i" style="left:44px;top:323.5px" width="8" height="10" viewBox="0 0 8 10"><path d="M1 0.9L5.4 5L1 9.1" fill="none" stroke="#a6a6a6" stroke-width="1.7"/></svg>
<svg class="i" style="left:55px;top:319px" width="16" height="16" viewBox="0 0 16 16" ><path d="M3 1.5H10.6L14 4.9V14.6H3Z" fill="#f6faff" stroke="#9c8552" stroke-width="1"/><path d="M10.6 1.5V4.9H14Z" fill="#ead9a8" stroke="#9c8552" stroke-width="0.7"/><rect x="4.7" y="10.9" width="1.4" height="1.5" fill="#2a5a9c"/><text x="6.8" y="12.3" font-family="Liberation Sans, sans-serif" font-weight="bold" font-size="11" fill="#2a5a9c" textLength="5.6" lengthAdjust="spacingAndGlyphs">c</text></svg>
<span id="t18" class="t" style="left:76px;top:318.0px;letter-spacing:-0.057px;">semihost_hardfault.c</span>
<svg class="i" style="left:28px;top:341.5px" width="8" height="10" viewBox="0 0 8 10"><path d="M1 0.9L5.4 5L1 9.1" fill="none" stroke="#a6a6a6" stroke-width="1.7"/></svg>
<svg class="i" style="left:39px;top:337px" width="16" height="16" viewBox="0 0 16 16" ><path d="M1.2 13.6V4.6Q1.2 3.6 2.2 3.6H5.2L6.4 5.2H10.6Q11.6 5.2 11.6 6.2V8.4" fill="#fdf0c4" stroke="#c8862a" stroke-width="1"/><path d="M1.4 14L4.4 8.4H15.6L12.2 14Z" fill="#fbe29c" stroke="#c8862a" stroke-width="1" stroke-linejoin="round"/><rect x="8.2" y="1.8" width="7" height="6.4" rx="1.1" fill="#5c86d6" stroke="#e4ecfb" stroke-width="0.7"/><text x="9.7" y="7.1" font-family="Liberation Sans, sans-serif" font-weight="bold" font-size="6.8" fill="#fff">c</text></svg>
<span id="t19" class="t" style="left:60px;top:336.0px;letter-spacing:-0.041px;">startup</span>
<svg class="i" style="left:25.5px;top:360.5px" width="10" height="7" viewBox="0 0 10 7"><path d="M0.9 0.9L5 5.2L9.1 0.9" fill="none" stroke="#303030" stroke-width="1.7"/></svg>
<svg class="i" style="left:39px;top:355px" width="16" height="16" viewBox="0 0 16 16" ><path d="M1.2 13.6V4.6Q1.2 3.6 2.2 3.6H5.2L6.4 5.2H10.6Q11.6 5.2 11.6 6.2V8.4" fill="#fdf0c4" stroke="#c8862a" stroke-width="1"/><path d="M1.4 14L4.4 8.4H15.6L12.2 14Z" fill="#fbe29c" stroke="#c8862a" stroke-width="1" stroke-linejoin="round"/><rect x="8.2" y="1.8" width="7" height="6.4" rx="1.1" fill="#5c86d6" stroke="#e4ecfb" stroke-width="0.7"/><text x="9.7" y="7.1" font-family="Liberation Sans, sans-serif" font-weight="bold" font-size="6.8" fill="#fff">c</text></svg>
<span id="t20" class="t" style="left:60px;top:354.0px;letter-spacing:0.035px;">utilities</span>
<svg class="i" style="left:44px;top:377.5px" width="8" height="10" viewBox="0 0 8 10"><path d="M1 0.9L5.4 5L1 9.1" fill="none" stroke="#a6a6a6" stroke-width="1.7"/></svg>
<svg class="i" style="left:55px;top:373px" width="16" height="16" viewBox="0 0 16 16" ><path d="M3 1.5H10.6L14 4.9V14.6H3Z" fill="#f6faff" stroke="#9c8552" stroke-width="1"/><path d="M10.6 1.5V4.9H14Z" fill="#ead9a8" stroke="#9c8552" stroke-width="0.7"/><rect x="4.7" y="10.9" width="1.4" height="1.5" fill="#2a5a9c"/><text x="6.8" y="12.3" font-family="Liberation Sans, sans-serif" font-weight="bold" font-size="11" fill="#2a5a9c" textLength="5.6" lengthAdjust="spacingAndGlyphs">c</text></svg>
<span id="t21" class="t" style="left:76px;top:372.0px;letter-spacing:-0.416px;">fsl_assert.c</span>
<svg class="i" style="left:44px;top:395.5px" width="8" height="10" viewBox="0 0 8 10"><path d="M1 0.9L5.4 5L1 9.1" fill="none" stroke="#a6a6a6" stroke-width="1.7"/></svg>
<svg class="i" style="left:55px;top:391px" width="16" height="16" viewBox="0 0 16 16" ><path d="M3 1.5H10.6L14 4.9V14.6H3Z" fill="#f6faff" stroke="#9c8552" stroke-width="1"/><path d="M10.6 1.5V4.9H14Z" fill="#ead9a8" stroke="#9c8552" stroke-width="0.7"/><rect x="4.7" y="10.9" width="1.4" height="1.5" fill="#2a5a9c"/><text x="6.8" y="12.3" font-family="Liberation Sans, sans-serif" font-weight="bold" font-size="11" fill="#2a5a9c" textLength="5.6" lengthAdjust="spacingAndGlyphs">h</text></svg>
<span id="t22" class="t" style="left:76px;top:390.0px;letter-spacing:-0.161px;">fsl_debug_console_conf.h</span>
<svg class="i" style="left:44px;top:413.5px" width="8" height="10" viewBox="0 0 8 10"><path d="M1 0.9L5.4 5L1 9.1" fill="none" stroke="#a6a6a6" stroke-width="1.7"/></svg>
<svg class="i" style="left:55px;top:409px" width="16" height="16" viewBox="0 0 16 16" ><path d="M3 1.5H10.6L14 4.9V14.6H3Z" fill="#f6faff" stroke="#9c8552" stroke-width="1"/><path d="M10.6 1.5V4.9H14Z" fill="#ead9a8" stroke="#9c8552" stroke-width="0.7"/><rect x="4.7" y="10.9" width="1.4" height="1.5" fill="#2a5a9c"/><text x="6.8" y="12.3" font-family="Liberation Sans, sans-serif" font-weight="bold" font-size="11" fill="#2a5a9c" textLength="5.6" lengthAdjust="spacingAndGlyphs">c</text></svg>
<span id="t23" class="t" style="left:76px;top:408.0px;letter-spacing:-0.196px;">fsl_debug_console.c</span>
<svg class="i" style="left:44px;top:431.5px" width="8" height="10" viewBox="0 0 8 10"><path d="M1 0.9L5.4 5L1 9.1" fill="none" stroke="#a6a6a6" stroke-width="1.7"/></svg>
<svg class="i" style="left:55px;top:427px" width="16" height="16" viewBox="0 0 16 16" ><path d="M3 1.5H10.6L14 4.9V14.6H3Z" fill="#f6faff" stroke="#9c8552" stroke-width="1"/><path d="M10.6 1.5V4.9H14Z" fill="#ead9a8" stroke="#9c8552" stroke-width="0.7"/><rect x="4.7" y="10.9" width="1.4" height="1.5" fill="#2a5a9c"/><text x="6.8" y="12.3" font-family="Liberation Sans, sans-serif" font-weight="bold" font-size="11" fill="#2a5a9c" textLength="5.6" lengthAdjust="spacingAndGlyphs">h</text></svg>
<span id="t24" class="t" style="left:76px;top:426.0px;letter-spacing:-0.184px;">fsl_debug_console.h</span>
<svg class="i" style="left:44px;top:449.5px" width="8" height="10" viewBox="0 0 8 10"><path d="M1 0.9L5.4 5L1 9.1" fill="none" stroke="#a6a6a6" stroke-width="1.7"/></svg>
<svg class="i" style="left:55px;top:445px" width="16" height="16" viewBox="0 0 16 16" ><path d="M3 1.5H10.6L14 4.9V14.6H3Z" fill="#f6faff" stroke="#9c8552" stroke-width="1"/><path d="M10.6 1.5V4.9H14Z" fill="#ead9a8" stroke="#9c8552" stroke-width="0.7"/><rect x="4.7" y="10.9" width="1.4" height="1.5" fill="#2a5a9c"/><text x="6.8" y="12.3" font-family="Liberation Sans, sans-serif" font-weight="bold" font-size="11" fill="#2a5a9c" textLength="5.6" lengthAdjust="spacingAndGlyphs">c</text></svg>
<span id="t25" class="t" style="left:76px;top:444.0px;letter-spacing:-0.221px;">fsl_str.c</span>
<svg class="i" style="left:44px;top:467.5px" width="8" height="10" viewBox="0 0 8 10"><path d="M1 0.9L5.4 5L1 9.1" fill="none" stroke="#a6a6a6" stroke-width="1.7"/></svg>
<svg class="i" style="left:55px;top:463px" width="16" height="16" viewBox="0 0 16 16" ><path d="M3 1.5H10.6L14 4.9V14.6H3Z" fill="#f6faff" stroke="#9c8552" stroke-width="1"/><path d="M10.6 1.5V4.9H14Z" fill="#ead9a8" stroke="#9c8552" stroke-width="0.7"/><rect x="4.7" y="10.9" width="1.4" height="1.5" fill="#2a5a9c"/><text x="6.8" y="12.3" font-family="Liberation Sans, sans-serif" font-weight="bold" font-size="11" fill="#2a5a9c" textLength="5.6" lengthAdjust="spacingAndGlyphs">h</text></svg>
<span id="t26" class="t" style="left:76px;top:462.0px;letter-spacing:-0.195px;">fsl_str.h</span>
<svg class="i" style="left:28px;top:485.5px" width="8" height="10" viewBox="0 0 8 10"><path d="M1 0.9L5.4 5L1 9.1" fill="none" stroke="#a6a6a6" stroke-width="1.7"/></svg>
<svg class="i" style="left:39px;top:481px" width="16" height="16" viewBox="0 0 16 16" ><path d="M1.2 13.6V4.6Q1.2 3.6 2.2 3.6H5.2L6.4 5.2H10.6Q11.6 5.2 11.6 6.2V8.4" fill="#fdf0c4" stroke="#c8862a" stroke-width="1"/><path d="M1.4 14L4.4 8.4H15.6L12.2 14Z" fill="#fbe29c" stroke="#c8862a" stroke-width="1" stroke-linejoin="round"/></svg>
<span id="t27" class="t" style="left:60px;top:480.0px;letter-spacing:-0.155px;">Debug</span>
<svg class="i" style="left:28px;top:503.5px" width="8" height="10" viewBox="0 0 8 10"><path d="M1 0.9L5.4 5L1 9.1" fill="none" stroke="#a6a6a6" stroke-width="1.7"/></svg>
<svg class="i" style="left:39px;top:499px" width="16" height="16" viewBox="0 0 16 16" ><path d="M1.2 13.6V4.6Q1.2 3.6 2.2 3.6H5.2L6.4 5.2H10.6Q11.6 5.2 11.6 6.2V8.4" fill="#fdf0c4" stroke="#c8862a" stroke-width="1"/><path d="M1.4 14L4.4 8.4H15.6L12.2 14Z" fill="#fbe29c" stroke="#c8862a" stroke-width="1" stroke-linejoin="round"/></svg>
<span id="t28" class="t" style="left:60px;top:498.0px;letter-spacing:0.047px;">doc</span>
<svg class="i" style="left:39px;top:517px" width="16" height="16" viewBox="0 0 16 16" ><rect x="0.4" y="0.4" width="15.2" height="15.2" rx="2.4" fill="#21409a" stroke="#3a5ab4" stroke-width="0.8"/><text x="1.5" y="12.9" font-family="Liberation Serif, serif" font-weight="bold" font-size="15" fill="#fff" textLength="13" lengthAdjust="spacingAndGlyphs">LS</text></svg>
<span id="t29" class="t" style="left:60px;top:516.0px;letter-spacing:-0.167px;">frdmk32l2a4s_hello_world LinkServer Debug.launch</span>
<svg class="i" style="left:39px;top:535px" width="16" height="16" viewBox="0 0 16 16" ><rect x="0.7" y="0.7" width="14.6" height="14.6" rx="2.2" fill="#6f9688" stroke="#27604f" stroke-width="1.4"/><g transform="scale(1.0)"><path d="M3.2 3H6.4L8.1 6L10 3H13L9.7 8L13.2 13.2H10L8 10L6 13.2H2.8L6.4 8Z" fill="#154a3c"/></g></svg>
<span id="t30" class="t" style="left:60px;top:534.0px;letter-spacing:-0.048px;">hello_world.mex</span>
<div style="left:484px;top:34px;width:931px;height:111px;box-sizing:border-box;border-radius:9px 9px 5px 5px;background:#fff;overflow:hidden;border-right:1px solid #dfe3ee"><div style="left:0;top:0;width:931px;height:26px;background:#f4f5fb"></div><div style="left:0;top:0;width:86px;height:26px;background:#f8f9fd;border-radius:9px 9px 0 0"></div></div>
<svg class="i" style="left:489.5px;top:40.5px" width="16" height="16" viewBox="0 0 16 16" ><g stroke="#245a50" stroke-width="1" fill="none"><path d="M4.6 1.2L5.2 4.4M8.6 2.4L7.2 4.6M0.6 5.6L3 5.4L4.6 6.4M1.4 10.2L3.6 8.8M3.8 12.6L5 13.6L5.4 15M5 11.6L5 13.6M9 14.8L8.8 13.4L8 12.6M14.4 10.6L12.8 9.4L11.4 9.2M14 5.6L11.6 5.2L10.6 6"/></g><ellipse cx="7.6" cy="8.6" rx="3.3" ry="4.3" transform="rotate(-32 7.6 8.6)" fill="url(#gBugG)" stroke="#2f8078" stroke-width="1.2"/><circle cx="5" cy="4.8" r="1.3" fill="#2f8078"/></svg>
<span id="t31" class="t" style="left:509.5px;top:38.5px;letter-spacing:-0.375px;">Debug</span>
<svg class="i" style="left:551.5px;top:42.5px" width="11" height="11" viewBox="0 0 11 11" ><path d="M2.1 0.6L5.3 3.8L8.5 0.6L10 2.1L6.8 5.3L10 8.5L8.5 10L5.3 6.8L2.1 10L0.6 8.5L3.8 5.3L0.6 2.1Z" fill="#fff" stroke="#505050" stroke-width="0.95" stroke-linejoin="round"/></svg>
<svg class="i" style="left:1284px;top:38.5px" width="18" height="17" viewBox="0 0 18 17" ><path d="M2.6 2.2L10.4 10M10.4 2.2L2.6 10" stroke="#c9c9c9" stroke-width="3.4" stroke-linecap="round"/><path d="M2.6 2.2L10.4 10M10.4 2.2L2.6 10" stroke="#e6e6e6" stroke-width="1.6" stroke-linecap="round"/><path d="M6.6 7.4L14.4 14.8M14.4 7.4L6.6 14.8" stroke="#a9a9a9" stroke-width="3.4" stroke-linecap="round"/></svg>
<div style="left:1306px;top:38px;width:1px;height:18px;background:#a0a0a0"></div>
<svg class="i" style="left:1314px;top:40px" width="18" height="16" viewBox="0 0 18 16" ><text x="0.4" y="12" font-family="Liberation Serif, serif" font-weight="bold" font-size="16" fill="#10108c">i</text><path d="M6.2 5.6H10.6V3L15.6 6.9L10.6 10.8V8.2H6.2Z" fill="#f6dc3a" stroke="#9a7414" stroke-width="0.8" stroke-linejoin="round"/></svg>
<svg class="i" style="left:1343px;top:41.5px" width="12" height="7" viewBox="0 0 12 7" ><path d="M0.8 0.7H11.2L6 6.2Z" fill="#fdfdfd" stroke="#5e5e5e" stroke-width="1.2" stroke-linejoin="round"/></svg>
<svg class="i" style="left:1367px;top:42px" width="11" height="6" viewBox="0 0 11 6" ><rect x="0.5" y="0.5" width="9" height="3" fill="#fff" stroke="#555" stroke-width="1"/></svg>
<svg class="i" style="left:1390px;top:42px" width="11" height="11" viewBox="0 0 11 11" ><rect x="0.5" y="0.5" width="9" height="9" fill="#fff" stroke="#555" stroke-width="1"/><rect x="0" y="0" width="10" height="1.7" fill="#555"/></svg>
<div style="left:1396px;top:61px;width:17px;height:81px;background:#f0f0f0"></div>
<div style="left:1396px;top:79px;width:15px;height:37px;background:#c9c9c9"></div>
<svg class="i" style="left:1400px;top:67.5px" width="10" height="7" viewBox="0 0 10 7"><path d="M1.4 5.4L5 1.8L8.6 5.4" fill="none" stroke="#484848" stroke-width="2.1"/></svg>
<svg class="i" style="left:1400px;top:130px" width="10" height="7" viewBox="0 0 10 7"><path d="M1.4 1.6L5 5.2L8.6 1.6" fill="none" stroke="#484848" stroke-width="2.1"/></svg>
<svg class="i" style="left:492.5px;top:68.5px" width="10" height="7" viewBox="0 0 10 7"><path d="M0.9 0.9L5 5.2L9.1 0.9" fill="none" stroke="#303030" stroke-width="1.7"/></svg>
<svg class="i" style="left:506px;top:63px" width="16" height="16" viewBox="0 0 16 16" ><rect x="0.4" y="0.4" width="15.2" height="15.2" rx="2.4" fill="#21409a" stroke="#3a5ab4" stroke-width="0.8"/><text x="1.5" y="12.9" font-family="Liberation Serif, serif" font-weight="bold" font-size="15" fill="#fff" textLength="13" lengthAdjust="spacingAndGlyphs">LS</text></svg>
<span id="t32" class="t" style="left:527px;top:62.0px;letter-spacing:-0.055px;">frdmk32l2a4s_hello_world LinkServer Debug [C/C++ (NXP Semiconductors) MCU Application]</span>
<svg class="i" style="left:508.5px;top:86.5px" width="10" height="7" viewBox="0 0 10 7"><path d="M0.9 0.9L5 5.2L9.1 0.9" fill="none" stroke="#303030" stroke-width="1.7"/></svg>
<svg class="i" style="left:522px;top:81px" width="16" height="16" viewBox="0 0 16 16" ><rect x="0.6" y="8.6" width="3.6" height="6.4" fill="#f6d26a" stroke="#b8861c" stroke-width="0.9"/><rect x="5.2" y="8.6" width="3.6" height="6.4" fill="#f6d26a" stroke="#b8861c" stroke-width="0.9"/><path d="M1.6 6.8Q2.4 2.4 6.4 2" fill="none" stroke="#3a78c8" stroke-width="1.1"/><path d="M0.4 6L1.6 8L3.4 6.4Z" fill="#3a78c8"/><path d="M13 10Q12.8 14 9.6 14.8" fill="none" stroke="#3a78c8" stroke-width="1.1"/><path d="M10.6 13.2L8.4 15L10.8 16Z" fill="#3a78c8"/><circle cx="10.6" cy="5" r="3" fill="#fce48a" stroke="#e0a020" stroke-width="1.6" stroke-dasharray="1.5 0.9"/><circle cx="10.6" cy="5" r="1.1" fill="#fff" stroke="#d49818" stroke-width="0.6"/></svg>
<span id="t33" class="t" style="left:543px;top:80.0px;letter-spacing:-0.197px;">frdmk32l2a4s_hello_world.axf [K32L2A41xxxxA (cortex-m0plus)]</span>
<svg class="i" style="left:524.5px;top:104.5px" width="10" height="7" viewBox="0 0 10 7"><path d="M0.9 0.9L5 5.2L9.1 0.9" fill="none" stroke="#303030" stroke-width="1.7"/></svg>
<svg class="i" style="left:538px;top:99px" width="16" height="16" viewBox="0 0 16 16" ><rect x="0.6" y="9.6" width="3.4" height="5.6" fill="#f6d26a" stroke="#b8861c" stroke-width="0.9"/><rect x="4.8" y="7.6" width="3.4" height="7.6" fill="#f6d26a" stroke="#b8861c" stroke-width="0.9"/><circle cx="10.6" cy="5.4" r="3.2" fill="#fff6d0" stroke="#c87a18" stroke-width="1.5" stroke-dasharray="1.5 0.9"/><circle cx="10.6" cy="5.4" r="1.2" fill="#fff" stroke="#c87a18" stroke-width="0.7"/></svg>
<span id="t34" class="t" style="left:559px;top:98.0px;letter-spacing:-0.198px;">Thread #1 1 (Suspended : Breakpoint)</span>
<div style="left:552px;top:116px;width:195px;height:18px;background:#d9d9d9"></div>
<svg class="i" style="left:555px;top:117px" width="16" height="16" viewBox="0 0 16 16" ><rect x="1" y="2.6" width="12" height="2.4" fill="#2c66b8"/><rect x="1" y="7" width="12" height="2.4" fill="#2c66b8"/><rect x="1" y="11.4" width="12" height="2.4" fill="#2c66b8"/><rect x="1" y="2.6" width="12" height="0.8" fill="#6a9ade"/><rect x="1" y="7" width="12" height="0.8" fill="#6a9ade"/><rect x="1" y="11.4" width="12" height="0.8" fill="#6a9ade"/></svg>
<span id="t35" class="t" style="left:575px;top:116.0px;letter-spacing:-0.139px;">main() at hello_world.c:35 0x6ee</span>
<div style="left:484px;top:134px;width:912px;height:8px;overflow:hidden">
<svg class="i" style="left:43.5px;top:-1px" width="16" height="16" viewBox="0 0 16 16" ><rect x="0.5" y="2.5" width="7.6" height="7" fill="#e8ece8" stroke="#9aa0a0" stroke-width="0.9"/><rect x="0.5" y="2.5" width="7.6" height="1.8" fill="#a8b0b0"/><path d="M2 6.4L4.8 7.6L2 8.8Z" fill="#3a9a4a"/></svg>
<span class="t" style="left:59px;top:1px;letter-spacing:-0.15px">arm-none-eabi-gdb (8.2.0.20190703)</span>
</div>
<div style="left:484px;top:149px;width:931px;height:446px;box-sizing:border-box;border-radius:9px 9px 6px 6px;background:#fff;overflow:hidden;border-right:1px solid #dfe3ee"><div style="left:0;top:0;width:931px;height:26px;background:#f4f5fb"></div><div style="left:0;top:0;width:119px;height:26px;background:linear-gradient(#e9edf6,#fff 80%);border-right:1px solid #e4e7f0;border-radius:9px 9px 0 0"></div></div>
<svg class="i" style="left:489.5px;top:155px" width="16" height="16" viewBox="0 0 16 16" ><path d="M3 1.5H10.6L14 4.9V14.6H3Z" fill="#f6faff" stroke="#9c8552" stroke-width="1"/><path d="M10.6 1.5V4.9H14Z" fill="#ead9a8" stroke="#9c8552" stroke-width="0.7"/><rect x="4.7" y="10.9" width="1.4" height="1.5" fill="#2a5a9c"/><text x="6.8" y="12.3" font-family="Liberation Sans, sans-serif" font-weight="bold" font-size="11" fill="#2a5a9c" textLength="5.6" lengthAdjust="spacingAndGlyphs">c</text></svg>
<span id="t36" class="t" style="left:509px;top:154.0px;letter-spacing:-0.081px;">hello_world.c</span>
<svg class="i" style="left:585.5px;top:157.5px" width="11" height="11" viewBox="0 0 11 11" ><path d="M2.1 0.6L5.3 3.8L8.5 0.6L10 2.1L6.8 5.3L10 8.5L8.5 10L5.3 6.8L2.1 10L0.6 8.5L3.8 5.3L0.6 2.1Z" fill="#fff" stroke="#505050" stroke-width="0.95" stroke-linejoin="round"/></svg>
<svg class="i" style="left:608.5px;top:155px" width="16" height="16" viewBox="0 0 16 16" ><path d="M3 1.5H10.6L14 4.9V14.6H3Z" fill="#fafcff" stroke="#d4c8a8" stroke-width="1"/><path d="M10.6 1.5V4.9H14Z" fill="#ead9a8" stroke="#d4c8a8" stroke-width="0.7"/><rect x="4.7" y="10.9" width="1.4" height="1.5" fill="#8ea6cc"/><text x="6.8" y="12.3" font-family="Liberation Sans, sans-serif" font-weight="bold" font-size="11" fill="#8ea6cc" textLength="5.6" lengthAdjust="spacingAndGlyphs">c</text></svg>
<span id="t37" class="t" style="left:628px;top:154.0px;letter-spacing:-0.474px;color:#9a9aa6">fsl_assert.c</span>
<svg class="i" style="left:1367px;top:157px" width="11" height="6" viewBox="0 0 11 6" ><rect x="0.5" y="0.5" width="9" height="3" fill="#fff" stroke="#555" stroke-width="1"/></svg>
<svg class="i" style="left:1390px;top:157px" width="11" height="11" viewBox="0 0 11 11" ><rect x="0.5" y="0.5" width="9" height="9" fill="#fff" stroke="#555" stroke-width="1"/><rect x="0" y="0" width="10" height="1.7" fill="#555"/></svg>
<div style="left:487px;top:176px;width:12px;height:196px;background:#f6f6f6"></div>
<div style="left:487px;top:372px;width:12px;height:203px;background:repeating-conic-gradient(#2a8aea 0% 25%, #ffffff 0% 50%) 0 0/2px 2px"></div>
<div style="left:487px;top:372px;width:12px;height:1px;background:#2a8aea"></div>
<div style="left:522px;top:176px;width:1px;height:399px;background:#f0f0f0"></div>
<div style="left:525px;top:447px;width:857px;height:15px;background:#e8f2fe"></div>
<div style="left:525px;top:447px;width:147px;height:15px;background:#c6dbae"></div>
<div style="left:1383px;top:176px;width:15px;height:399px;background:#f0f0f0"></div>
<div style="left:1383px;top:319px;width:15px;height:205px;background:#c9c9c9"></div>
<div style="left:1398px;top:176px;width:14px;height:416px;background:#f7f7f7"></div>
<div style="left:487px;top:575px;width:36px;height:17px;background:#f7f7f7"></div>
<div style="left:523px;top:575px;width:860px;height:17px;background:#f0f0f0"></div>
<div style="left:1383px;top:575px;width:15px;height:17px;background:#f0f0f0"></div>
<div style="left:1401px;top:461px;width:9px;height:5px;box-sizing:border-box;border:1px solid #c6dbae"></div>
<svg class="i" style="left:1386.5px;top:182.5px" width="10" height="7" viewBox="0 0 10 7"><path d="M1.4 5.4L5 1.8L8.6 5.4" fill="none" stroke="#484848" stroke-width="2.1"/></svg>
<svg class="i" style="left:1386.5px;top:562.5px" width="10" height="7" viewBox="0 0 10 7"><path d="M1.4 1.6L5 5.2L8.6 1.6" fill="none" stroke="#303030" stroke-width="2.1"/></svg>
<svg class="i" style="left:528px;top:579px" width="6" height="9" viewBox="0 0 6 9"><path d="M5 0.8L1.5 4.5L5 8.2" fill="none" stroke="#b4b4b4" stroke-width="2"/></svg>
<svg class="i" style="left:1371px;top:579px" width="6" height="9" viewBox="0 0 6 9"><path d="M1 0.8L4.5 4.5L1 8.2" fill="none" stroke="#b4b4b4" stroke-width="2"/></svg>
<div style="left:484px;top:176px;width:899px;height:399px;overflow:hidden">
<span class="ln" style="left:15px;top:4px">17</span>
<span class="cd" style="left:41px;top:4px"><span class="c"> <span class="st">******************************************************************************</span>/</span></span>
<span class="ln" style="left:15px;top:19px">18</span>
<span class="ln" style="left:15px;top:34px">19</span>
<span class="ln" style="left:15px;top:49px">20</span>
<span class="cd" style="left:41px;top:49px"><span class="c">/<span class="st">*******************************************************************************</span></span></span>
<span class="ln" style="left:15px;top:64px">21</span>
<span class="cd" style="left:41px;top:64px"><span class="c"> * Prototypes</span></span>
<span class="ln" style="left:15px;top:79px">22</span>
<span class="cd" style="left:41px;top:79px"><span class="c"> <span class="st">******************************************************************************</span>/</span></span>
<span class="ln" style="left:15px;top:94px">23</span>
<span class="ln" style="left:15px;top:109px">24</span>
<span class="cd" style="left:41px;top:109px"><span class="c">/<span class="st">*******************************************************************************</span></span></span>
<span class="ln" style="left:15px;top:124px">25</span>
<span class="cd" style="left:41px;top:124px"><span class="c"> * Code</span></span>
<span class="ln" style="left:15px;top:139px">26</span>
<span class="cd" style="left:41px;top:139px"><span class="c"> <span class="st">******************************************************************************</span>/</span></span>
<span class="ln" style="left:15px;top:154px">27</span>
<span class="cd" style="left:41px;top:154px"><span class="c">/*!</span></span>
<span class="ln" style="left:15px;top:169px">28</span>
<span class="cd" style="left:41px;top:169px"><span class="c"> * @brief Main function</span></span>
<span class="ln" style="left:15px;top:184px">29</span>
<span class="cd" style="left:41px;top:184px"><span class="c"> */</span></span>
<span class="ln" style="left:15px;top:199px">30</span>
<span class="cd" style="left:41px;top:199px"><span class="k">int</span> <span class="b">main</span>(<span class="k">void</span>)</span>
<span class="ln" style="left:15px;top:214px">31</span>
<span class="cd" style="left:41px;top:214px">{</span>
<span class="ln" style="left:15px;top:229px">32</span>
<span class="cd" style="left:41px;top:229px">    <span class="k">char</span> ch;</span>
<span class="ln" style="left:15px;top:244px">33</span>
<span class="ln" style="left:15px;top:259px">34</span>
<span class="cd" style="left:41px;top:259px">    <span class="c">/* </span><span class="cu">Init</span><span class="c"> board hardware. */</span></span>
<span class="ln" style="left:15px;top:274px">35</span>
<span class="cd" style="left:41px;top:274px">    BOARD_InitPins();</span>
<span class="ln" style="left:15px;top:289px">36</span>
<span class="cd" style="left:41px;top:289px">    BOARD_BootClockRUN();</span>
<span class="ln" style="left:15px;top:304px">37</span>
<span class="cd" style="left:41px;top:304px">    BOARD_InitDebugConsole();</span>
<span class="ln" style="left:15px;top:319px">38</span>
<span class="ln" style="left:15px;top:334px">39</span>
<span class="cd" style="left:41px;top:334px">    PRINTF(<span class="s">"hello world.\r\n"</span>);</span>
<span class="ln" style="left:15px;top:349px">40</span>
<span class="ln" style="left:15px;top:364px">41</span>
<span class="cd" style="left:41px;top:364px">    <span class="k">while</span> (1)</span>
<span class="ln" style="left:15px;top:379px">42</span>
<span class="cd" style="left:41px;top:379px">    {</span>
<span class="ln" style="left:15px;top:394px">43</span>
<span class="cd" style="left:41px;top:394px">        ch = GETCHAR();</span>
</div>
<svg class="i" style="left:574px;top:444px" width="30" height="4" viewBox="0 0 30 4"><path d="M0.5 3L2.5 1L4.5 3L6.5 1L8.5 3L10.5 1L12.5 3L14.5 1L16.5 3L18.5 1L20.5 3L22.5 1L24.5 3L26.5 1L28.5 3" fill="none" stroke="#f26a3a" stroke-width="0.9"/></svg>
<svg class="i" style="left:513px;top:225px" width="9" height="9" viewBox="0 0 9 9" ><circle cx="4.5" cy="4.5" r="3.7" fill="#f4f6fb" stroke="#a4acbc" stroke-width="0.9"/><path d="M2.4 4.5H6.6" stroke="#4a4a4a" stroke-width="1.1"/></svg>
<svg class="i" style="left:513px;top:285px" width="9" height="9" viewBox="0 0 9 9" ><circle cx="4.5" cy="4.5" r="3.7" fill="#f4f6fb" stroke="#a4acbc" stroke-width="0.9"/><path d="M2.4 4.5H6.6" stroke="#4a4a4a" stroke-width="1.1"/></svg>
<svg class="i" style="left:513px;top:330px" width="9" height="9" viewBox="0 0 9 9" ><circle cx="4.5" cy="4.5" r="3.7" fill="#f4f6fb" stroke="#a4acbc" stroke-width="0.9"/><path d="M2.4 4.5H6.6" stroke="#4a4a4a" stroke-width="1.1"/></svg>
<svg class="i" style="left:513px;top:375px" width="9" height="9" viewBox="0 0 9 9" ><circle cx="4.5" cy="4.5" r="3.7" fill="#f4f6fb" stroke="#a4acbc" stroke-width="0.9"/><path d="M2.4 4.5H6.6" stroke="#4a4a4a" stroke-width="1.1"/></svg>
<svg class="i" style="left:487px;top:450.5px" width="9" height="9" viewBox="0 0 9 9" ><path d="M0.6 2.6H3.2V0.8L6.6 4.5L3.2 8.2V6.4H0.6Z" fill="#6a96dc" stroke="#2a4a9a" stroke-width="0.8" stroke-linejoin="round"/></svg>
</body></html>
